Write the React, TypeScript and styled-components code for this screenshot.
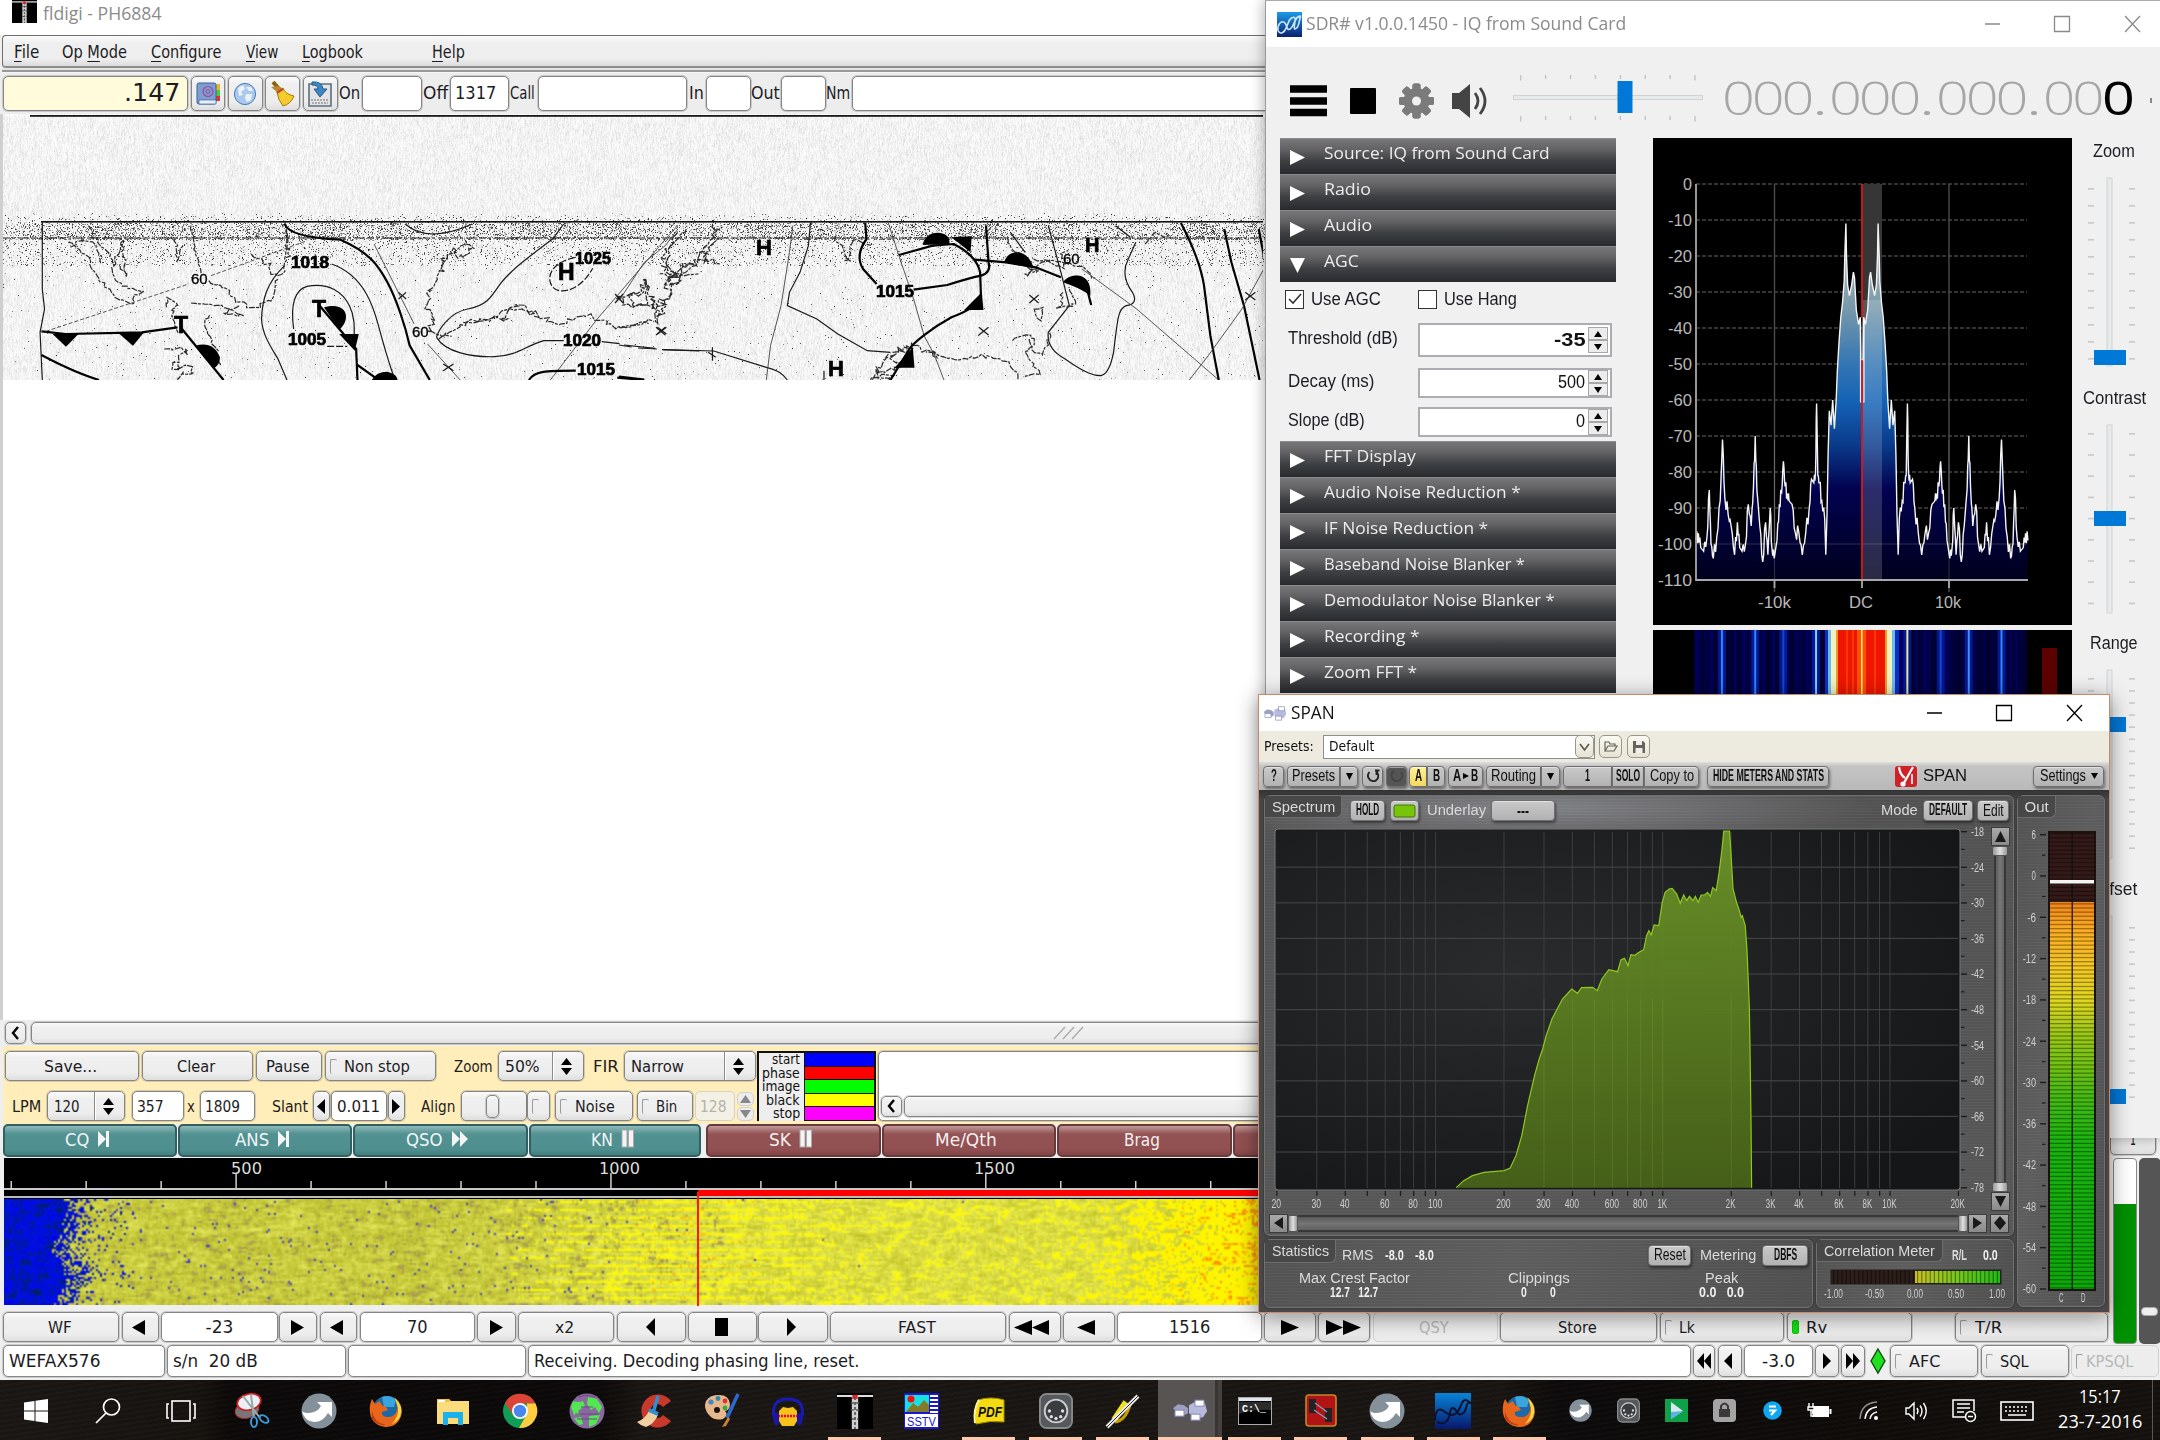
import React, { useLayoutEffect, useRef } from "react";
import styled, { createGlobalStyle, css } from "styled-components";

const TAHOMA = '"DejaVu Sans", Verdana, sans-serif';
const SEGOE = '"Open Sans", "Noto Sans", sans-serif';
const ARIAL = '"Liberation Sans", Arial, sans-serif';
const NARROW = '"Liberation Sans Narrow", "Liberation Sans", sans-serif';

const Global = createGlobalStyle`
  * { box-sizing: border-box; }
  body { margin: 0; background: #fff; }
`;

/* ---------- shared helpers ---------- */

function rng(seed: number) {
  let s = seed >>> 0;
  return () => {
    s = (s + 0x6d2b79f5) >>> 0;
    let t = s;
    t = Math.imul(t ^ (t >>> 15), t | 1);
    t ^= t + Math.imul(t ^ (t >>> 7), t | 61);
    return ((t ^ (t >>> 14)) >>> 0) / 4294967296;
  };
}

const FitBox = styled.span<{ $w: number; $s: number; $c: string; $f: string; $b: number; $ls: number }>`
  display: inline-block;
  flex: none;
  width: ${(p) => p.$w}px;
  margin-top: ${(p) => (p.$s === 16.5 && p.$f === TAHOMA ? 2 : 0)}px;
  font-family: ${(p) => p.$f};
  font-size: ${(p) => p.$s}px;
  font-weight: ${(p) => p.$b};
  letter-spacing: ${(p) => p.$ls}px;
  line-height: 1.2;
  color: ${(p) => p.$c};
  white-space: pre;
`;
const FitInner = styled.span`
  display: inline-block;
  transform-origin: 0 50%;
  u { text-underline-offset: 3px; }
`;

type FitProps = { w: number; s?: number; c?: string; f?: string; b?: number; ls?: number; children: React.ReactNode };

/* Text condensed or widened so that it fills exactly the given width. */
function Fit({ w, s = 17, c = "#1c1c24", f = TAHOMA, b = 400, ls = 0, children }: FitProps) {
  const ref = useRef<HTMLSpanElement>(null);
  useLayoutEffect(() => {
    const el = ref.current;
    if (!el) return;
    el.style.transform = "none";
    const natural = el.offsetWidth;
    if (natural) el.style.transform = `scaleX(${w / natural})`;
  });
  return (
    <FitBox $w={w} $s={s} $c={c} $f={f} $b={b} $ls={ls}>
      <FitInner ref={ref}>{children}</FitInner>
    </FitBox>
  );
}

type Paint = (ctx: CanvasRenderingContext2D, w: number, h: number) => void;
const Surface = styled.canvas`display: block;`;
function Painted({ w, h, cw, ch, paint }: { w: number; h: number; cw?: number; ch?: number; paint: Paint }) {
  const ref = useRef<HTMLCanvasElement>(null);
  const rw = cw ?? w;
  const rh = ch ?? h;
  useLayoutEffect(() => {
    const ctx = ref.current?.getContext("2d");
    if (ctx) paint(ctx, rw, rh);
  }, [paint, rw, rh]);
  return <Surface ref={ref} width={rw} height={rh} style={{ width: w, height: h }} />;
}

const Svg = styled.svg`display: block; flex: none; overflow: visible;`;

const Row = styled.div<{ $h?: number; $pl?: number; $pt?: number }>`
  display: flex;
  flex: none;
  align-items: center;
  ${(p) => p.$h !== undefined && `height: ${p.$h}px;`}
  padding-left: ${(p) => p.$pl ?? 0}px;
  padding-top: ${(p) => p.$pt ?? 0}px;
`;
const Gap = styled.div<{ $w?: number; $h?: number }>`
  flex: none;
  width: ${(p) => p.$w ?? 0}px;
  height: ${(p) => p.$h ?? 0}px;
`;
const Grow = styled.div`flex: 1;`;

const Desktop = styled.div`
  position: relative;
  width: 2160px;
  height: 1440px;
  overflow: hidden;
  background: #fff;
`;

/* ---------- fldigi ---------- */

const FlWindow = styled.section`
  position: absolute;
  left: 0;
  top: 0;
  width: 2160px;
  height: 1380px;
  display: flex;
  flex-direction: column;
  background: #efefef;
  overflow: hidden;
`;
const FlTitle = styled.header`
  display: flex;
  flex: none;
  gap: 6px;
  height: 35px;
  padding: 0 0 0 12px;
  background: #fff;
`;
const FlMenu = styled.nav`
  display: flex;
  flex: none;
  align-items: center;
  height: 33px;
  margin-left: 2px;
  padding: 2px 0 0 11px;
  border: 1px solid #6c6c6c;
  border-bottom: 2px solid #8d8d8d;
  border-radius: 4px;
  background: linear-gradient(#fafafa, #efefef 25%, #eeeeee 75%, #dcdcdc);
`;
const Rule = styled.div`
  flex: none;
  height: 5px;
  margin-left: 2px;
  background: linear-gradient(#e4e4e4 0 2px, #999 2px 4px, #f6f6f6 4px);
`;
const FlToolbar = styled.div`
  display: flex;
  flex: none;
  align-items: center;
  height: 41px;
  padding: 0 0 0 3px;
  background: #ededed;
`;
const bevel = css`
  border: 1px solid #858585;
  border-radius: 5px;
  box-shadow: 0 0 0 1px rgba(120, 120, 120, 0.3);
`;
const FlBtn = styled.div<{ $w: number; $h: number; $off?: boolean }>`
  ${bevel}
  display: flex;
  flex: none;
  align-items: center;
  justify-content: center;
  width: ${(p) => p.$w}px;
  height: ${(p) => p.$h}px;
  padding-right: ${(p) => (p.$w > 60 ? 3 : 1)}px;
  background: linear-gradient(#fbfbfb, #f0f0f0 20%, #ededed 75%, #dedede);
  ${(p) => p.$off && "border-color: #d0d0d0; box-shadow: none; background: #ededed;"}
`;
const FlLeft = styled(FlBtn)`
  justify-content: flex-start;
  padding-left: 4px;
  gap: 3px;
`;
const FlInput = styled.div<{ $w: number; $h: number; $bg?: string; $right?: boolean; $mid?: boolean; $off?: boolean }>`
  ${bevel}
  display: flex;
  flex: none;
  align-items: center;
  justify-content: ${(p) => (p.$right ? "flex-end" : p.$mid ? "center" : "flex-start")};
  width: ${(p) => p.$w}px;
  height: ${(p) => p.$h}px;
  padding: 0 ${(p) => (p.$right ? 7 : 4)}px;
  background: ${(p) => p.$bg ?? "#fff"};
  ${(p) => p.$off && "border-color: #d8d2c0; box-shadow: none; background: #f3f0e6;"}
`;
const Corner = styled.i<{ $on?: boolean }>`
  flex: none;
  width: 7px;
  height: 15px;
  border: 1px solid #9a9a9a;
  border-right: none;
  border-bottom: none;
  border-radius: 2px;
  ${(p) => p.$on && "background: #12dd12; border: 1px solid #12c012; height: 14px;"}
`;
const Divider = styled.i`
  flex: none;
  width: 2px;
  height: 100%;
  border-left: 1px solid #8a8a8a;
  border-right: 1px solid #fff;
`;

const Tri = ({ d, w, h, c = "#000" }: { d: "l" | "r" | "u" | "d"; w: number; h: number; c?: string }) => {
  const pts = { l: "10,0 0,5 10,10", r: "0,0 10,5 0,10", u: "0,10 5,0 10,10", d: "0,0 10,0 5,10" }[d];
  return (
    <Svg width={w} height={h} viewBox="0 0 10 10" preserveAspectRatio="none"><polygon points={pts} fill={c} /></Svg>
  );
};
const UpDown = styled.div`
  display: flex;
  flex: 1;
  flex-direction: column;
  align-items: center;
  gap: 3px;
`;

function Combo({ w, value, tw, div }: { w: number; value: string; tw: number; div: number }) {
  return (
    <FlInput $w={w} $h={30} $bg="linear-gradient(#fbfbfb,#efefef 25%,#ededed 75%,#dedede)">
      <Gap $w={2} />
      <Fit w={tw} s={16.5}>{value}</Fit>
      <Gap $w={div - tw - 9} />
      <Divider />
      <UpDown><Tri d="u" w={11} h={7} /><Tri d="d" w={11} h={7} /></UpDown>
    </FlInput>
  );
}

const FaxView = styled.div`
  position: relative;
  flex: none;
  height: 906px;
  border-left: 3px solid #cfcfcf;
  background: #fff;
`;
const FaxMap = styled.svg`
  position: absolute;
  left: 0;
  top: 0;
`;

const paintFax: Paint = (ctx, w, h) => {
  const r = rng(7);
  const img = ctx.createImageData(w, h);
  const prev = new Float32Array(w);
  for (let y = 0; y < h; y++) {
    for (let x = 0; x < w; x++) {
      const n = r();
      let v = 251 - Math.pow(n, 3) * 28;
      prev[x] = prev[x] * 0.55 + (251 - v) * 0.7;
      v = 253 - prev[x];
      let p = 0;
      if (y > 98 && y < 109) p = (y - 98) * 0.014;
      if (y >= 109 && y < 125) p = 0.3;
      if (y >= 123 && y < 126) p = 0.5;
      if (y >= 126 && y < 152) p = 0.1;
      if (y >= 152) p = 0.006;
      if (y >= 109 && y < 125) p *= 0.7 + 0.7 * Math.abs(Math.sin(x / 70) * Math.sin(x / 23));
      if (r() < p) v -= 40 + r() * 160;
      const i = (y * w + x) * 4;
      img.data[i] = img.data[i + 1] = img.data[i + 2] = Math.max(10, v);
      img.data[i + 3] = 255;
    }
  }
  ctx.putImageData(img, 0, 0);
};

function rough(pts: number[][], amp: number, seed: number) {
  const r = rng(seed);
  let d = `M${pts[0][0]} ${pts[0][1]}`;
  for (let i = 1; i < pts.length; i++) {
    const [ax, ay] = pts[i - 1];
    const [bx, by] = pts[i];
    const n = Math.max(2, Math.round(Math.hypot(bx - ax, by - ay) / 9));
    for (let k = 1; k <= n; k++) {
      const t = k / n;
      d += `L${(ax + (bx - ax) * t + (r() - 0.5) * amp).toFixed(1)} ${(ay + (by - ay) * t + (r() - 0.5) * amp).toFixed(1)}`;
    }
  }
  return d;
}

const Ink = styled.g`
  path, line { fill: none; stroke: #1a1a1a; stroke-width: 1.2; vector-effect: non-scaling-stroke; }
  path.b { stroke-width: 2.2; stroke: #000; }
  path.t { stroke-width: 0.9; stroke: #444; }
  path.f { fill: #000; stroke: none; }
  path.c { stroke: #2a2a2a; stroke-dasharray: 6 1 3 1.5; }
  path.dash { stroke-dasharray: 7 2; }
  path.t.dash { stroke-dasharray: 4 2; }
  text { font-family: ${ARIAL}; font-weight: 700; fill: #000; stroke: #000; stroke-width: 0.7; }
  text.thin { font-weight: 400; stroke-width: 0.3; }
`;

const coastA: [number[][], number][] = [
  [[[155, 730], [200, 775], [215, 830], [245, 870], [262, 895], [300, 915], [300, 885], [330, 880]], 10],
  [[[160, 745], [190, 720], [215, 735], [230, 790]], 10],
  [[[258, 800], [275, 725], [285, 830], [270, 800]], 10],
  [[[200, 680], [215, 720], [250, 770], [260, 840], [290, 870], [325, 880]], 9],
  [[[395, 720], [400, 790], [412, 740]], 8],
  [[[430, 680], [440, 760], [455, 820]], 6],
  [[[470, 845], [510, 865], [530, 905], [575, 930], [615, 895], [620, 840]], 12],
  [[[565, 765], [600, 790], [615, 830], [640, 825], [650, 780], [640, 690]], 14],
  [[[430, 912], [490, 918], [550, 950], [500, 945], [540, 920]], 8],
  [[[375, 925], [380, 900], [405, 915], [385, 930], [400, 1000]], 10],
  [[[470, 950], [465, 1000], [480, 1030], [500, 1100]], 14],
  [[[370, 1050], [420, 1060], [390, 1100], [440, 1110], [395, 1143]], 24],
  [[[1045, 735], [1010, 770], [985, 830], [965, 880], [955, 920], [975, 960], [960, 1000], [1010, 1010]], 14],
  [[[1045, 735], [1060, 750], [1030, 780], [1015, 750], [985, 800]], 14],
  [[[985, 1020], [1050, 970], [1100, 965], [1150, 925], [1200, 945], [1250, 975], [1325, 950], [1380, 985], [1470, 965]], 16],
  [[[1040, 970], [1090, 965], [1130, 960], [1160, 920], [1210, 950]], 24],
  [[[1385, 900], [1420, 880], [1440, 890], [1450, 850], [1470, 920], [1410, 920], [1385, 900]], 16],
  [[[1490, 940], [1470, 965], [1500, 860], [1520, 820], [1560, 790]], 24],
  [[[1520, 700], [1490, 770], [1500, 830], [1560, 820]], 16],
];
const coastB: [number[][], number][] = [
  [[[160, 690], [120, 750], [110, 800], [135, 830], [185, 800], [205, 740], [245, 680]], 10],
  [[[100, 800], [150, 850], [115, 860], [150, 800], [210, 790], [190, 760]], 24],
  [[[220, 680], [230, 720], [200, 780], [240, 790]], 16],
  [[[75, 900], [95, 950], [130, 860], [100, 820]], 14],
  [[[20, 890], [50, 880], [60, 840], [70, 920], [40, 920], [20, 890]], 14],
  [[[0, 985], [70, 970]], 8],
  [[[515, 710], [545, 790], [555, 720], [600, 740]], 14],
  [[[740, 1060], [800, 1085], [860, 1070], [930, 1090], [950, 1143]], 10],
  [[[650, 1060], [700, 1040], [640, 1080], [680, 1100], [610, 1120], [650, 1143], [600, 1140]], 22],
  [[[640, 1065], [620, 1110], [600, 1143]], 18],
  [[[700, 1040], [760, 1070], [730, 1060]], 14],
  [[[935, 1025], [975, 1005], [990, 1030], [965, 1060], [1000, 1125], [960, 1130]], 8],
  [[[975, 1020], [985, 1060], [1010, 1065], [1025, 1000]], 8],
  [[[985, 930], [1010, 925], [1000, 965], [985, 930]], 6],
  [[[925, 720], [950, 780], [990, 820], [960, 830], [1020, 790], [1050, 810], [1060, 760]], 18],
  [[[985, 780], [1040, 790], [1100, 800], [1130, 840]], 10],
  [[[1055, 880], [1045, 930], [1080, 920], [1075, 870]], 14],
  [[[1250, 735], [1275, 700], [1300, 720]], 10],
];

function WeatherMap() {
  return (
    <FaxMap width={1260} height={266} viewBox="4 115 1260 266">
      <rect x={31} y={116} width={1240} height={1.8} fill="#1a1a1a" />
      <rect x={42} y={222} width={1230} height={1.6} fill="#111" />
      <path d="M4 239H1268" stroke="#333" strokeWidth={1.2} strokeDasharray="7 2 3 3 11 2" fill="none" />
      <Ink transform="scale(0.44643 0.33333)">
        {coastA.map(([p, a], i) => <path key={i} className="c" d={rough(p, a, i + 3)} />)}
        <path d="M97 669L97 870L102 930L92 1000L97 1143" />
        <path d="M640 800C600 850 590 900 588 960C590 1010 612 1050 625 1080L645 1143" />
        <path d="M640 669L648 720L640 780" className="c" /><path d="M745 795C820 830 840 930 850 980S870 1080 887 1143" />
        <path d="M640 675Q650 715 765 722C830 760 850 800 870 850S910 980 920 1040L965 1143" className="b" />
        <path d="M660 990C655 940 655 875 690 862C740 850 770 880 785 920S795 1000 795 1040" />
        <path d="M735 1042L780 1042" className="dash" />
        <path d="M715 915L800 1050L803 1143" className="b" />
        <path d="M803 1098L850 1143" className="b" />
        <path d="M728 925C780 905 790 960 762 992Z" className="f" />
        <path d="M762 1005L806 1005L797 1055Z" className="f" />
        <path d="M835 1143Q845 1118 870 1118Q892 1125 893 1143Z" className="f" />
        <path d="M95 997L150 1005L320 1000L400 985" className="b" />
        <path d="M120 1005L178 1005L150 1043Z" className="f" />
        <path d="M268 1003L325 1000L300 1040Z" className="f" />
        <path d="M410 990L503 1143" className="b" />
        <path d="M440 1040Q480 1025 495 1075Q495 1100 480 1108Z" className="f" />
        <path d="M95 1068C140 1100 180 1125 224 1143" className="b" />
        <path d="M105 997L425 855M475 830L690 725" className="t dash" />
        <path d="M840 735L930 975M960 1035L1033 1143" className="t" />
        <path d="M895 880L912 900M912 880L895 900M995 1095L1018 1115M1018 1095L995 1115M1380 885L1398 912M1398 885L1380 912M1475 985L1495 1005M1495 985L1475 1005" />
        <path d="M1290 775C1240 790 1225 830 1238 860S1300 880 1330 808" className="dash" />
        <path d="M1265 675L1240 720C1190 770 1140 820 1120 860S1090 920 1050 930S985 990 980 1015" />
        <path d="M910 675Q960 735 1060 675" />
        <path d="M980 1015C1000 1060 1060 1075 1110 1073S1180 1040 1220 1025L1265 1025M1350 1028L1390 1034M1400 1038L1470 1048M1485 1052L1568 1056" />
        <path d="M1235 1143L1340 960L1385 890L1480 740L1520 680" className="t" />
        <path d="M1187 1143C1200 1115 1225 1115 1292 1115" className="b" />
        <path d="M1385 1136L1445 1143" className="b" />
      </Ink>
      <Ink transform="translate(620 0) scale(0.42088 0.33333)">
        {coastB.map(([p, a], i) => <path key={i} className="c" d={rough(p, a, i + 40)} />)}
        <path d="M0 1038L30 1044M45 1047L90 1050M105 1052L225 1056L350 1105C380 1115 390 1125 400 1143" />
        <path d="M0 1133L60 1142" className="b" />
        <path d="M0 905L60 790L110 740L140 690" className="t" />
        <path d="M413 680L405 760L385 920L360 1040L350 1143" className="t" />
        <path d="M455 670L450 740L430 820L405 880L400 920L470 960L520 1005L590 1055L645 1060" />
        <path d="M585 672L588 720Q560 770 580 810L612 855" className="b" />
        <path d="M640 672L665 770L700 900L725 1010L750 1070L772 1143" className="t" />
        <path d="M665 768L745 740L795 735Q850 770 858 820L860 890Q860 920 790 955C740 990 700 1030 690 1050L645 1143" className="b" />
        <path d="M700 872L780 858Q830 838 860 830Q885 820 878 790L872 680" className="b" />
        <path d="M845 782L920 790L990 805L1050 835" className="b" />
        <path d="M722 738C725 690 790 690 785 735Z" className="f" />
        <path d="M790 715L838 712L835 760Z" className="f" />
        <path d="M915 790C925 745 975 750 985 808Z" className="f" />
        <path d="M1055 850C1070 820 1125 815 1120 890Q1100 870 1055 850Z" className="f" />
        <path d="M1110 860L1122 918" className="b" />
        <path d="M862 880L866 933L820 933Z" className="f" />
        <path d="M698 1045L702 1106L655 1106Z" className="f" />
        <path d="M1020 680L1050 820L1070 920L1020 1000Q1015 1050 1060 1080C1110 1125 1130 1130 1145 1130Q1165 1125 1175 1060C1185 960 1185 930 1205 920Q1235 915 1220 880Q1190 830 1210 780L1228 730" />
        <path d="M1100 810L1230 930L1425 1143" className="t" />
        <path d="M1335 672Q1380 780 1390 860L1405 1010L1425 1143" className="b" />
        <path d="M1438 690L1455 790L1485 920L1522 1143" className="b" />
        <path d="M1355 1143L1400 1070L1480 930L1532 810" className="t" />
        <path d="M1520 690L1532 770" className="b" />
        <path d="M975 888L997 912M997 888L975 912M855 985L878 1008M878 985L855 1008M88 985L110 1008M110 985L88 1008M1488 880L1512 903M1512 880L1488 903M212 1060L230 1075M222 1045L222 1085M487 1115L487 1143" />
        <path d="M930 700L965 760M1180 680L1215 715" />
      </Ink>
      <Ink>
        <g fontSize={16}>
          <text x={292} y={269} textLength={38} lengthAdjust="spacingAndGlyphs">1018</text>
          <text x={289} y={346} textLength={38} lengthAdjust="spacingAndGlyphs">1005</text>
          <text x={576} y={265} textLength={36} lengthAdjust="spacingAndGlyphs">1025</text>
          <text x={564} y={347} textLength={38} lengthAdjust="spacingAndGlyphs">1020</text>
          <text x={578} y={376} textLength={38} lengthAdjust="spacingAndGlyphs">1015</text>
          <text x={877} y={298} textLength={38} lengthAdjust="spacingAndGlyphs">1015</text>
        </g>
        <g fontSize={23}>
          <text x={313} y={318}>T</text>
          <text x={175} y={334}>T</text>
          <text x={559} y={281}>H</text>
          <text x={757} y={256} fontSize={22}>H</text>
          <text x={1086} y={253} fontSize={20}>H</text>
          <text x={829} y={377} fontSize={22}>H</text>
        </g>
        <g fontSize={15}>
          <text x={192} y={285} className="thin">60</text>
          <text x={413} y={338} className="thin">60</text>
          <text x={1064} y={265} className="thin">60</text>
        </g>
      </Ink>
    </FaxMap>
  );
}

const ScrollRow = styled.div`
  display: flex;
  flex: none;
  align-items: center;
  height: 26px;
  padding-left: 5px;
  gap: 5px;
  background: #eee;
`;
const FaxPanel = styled.div`
  display: flex;
  flex: none;
  height: 78px;
  margin-left: 3px;
  padding: 5px 0 3px 2px;
  background: #ffeeb9;
`;
const Col = styled.div<{ $w?: number; $g?: number }>`
  display: flex;
  flex: none;
  flex-direction: column;
  ${(p) => p.$w !== undefined && `width: ${p.$w}px;`}
  gap: ${(p) => p.$g ?? 0}px;
`;
const Legend = styled.div`
  flex: none;
  width: 119px;
  height: 70px;
  border: 2px solid #111;
  border-bottom: none;
  background: #eee;
  overflow: hidden;
`;
const LegendRow = styled.div`
  display: flex;
  justify-content: flex-end;
  height: 13.5px;
  align-items: center;
  gap: 4px;
`;
const Swatch = styled.i<{ $c: string }>`
  width: 70px;
  height: 13.5px;
  border: 1px solid #111;
  border-top: none;
  border-right: none;
  background: ${(p) => p.$c};
`;
const TextBox = styled.div`
  ${bevel}
  display: flex;
  flex: none;
  flex-direction: column;
  justify-content: flex-end;
  width: 420px;
  height: 70px;
  padding: 0 0 3px 2px;
  background: #fff;
`;
const MacroBar = styled.div`
  display: flex;
  flex: none;
  height: 33px;
  padding-left: 3px;
  gap: 1px;
`;
const Macro = styled.div<{ $w: number; $red?: boolean }>`
  display: flex;
  flex: none;
  align-items: center;
  justify-content: center;
  gap: 9px;
  width: ${(p) => p.$w}px;
  padding-right: 6px;
  border: 2px solid ${(p) => (p.$red ? "#693a3b" : "#326060")};
  border-radius: 5px;
  background: ${(p) =>
    p.$red
      ? "linear-gradient(#c09a9a, #935253 28%, #915051 80%, #834546)"
      : "linear-gradient(#8fb9b9, #529191 28%, #508f8f 80%, #437f7f)"};
`;
const WfHead = styled.div`
  flex: none;
  width: 2106px;
  height: 41px;
  background: #000;
`;

const paintFall: Paint = (ctx, w, h) => {
  const r = rng(21);
  const img = ctx.createImageData(w, h);
  const up = new Float32Array(w);
  for (let y = 0; y < h; y++) {
    const edge = 26 + Math.sin(y / 5) * 3 + r() * 3;
    const band = Math.sin(y * 1.57) > 0.3 ? 1 : 0;
    let s = 0;
    for (let x = 0; x < w; x++) {
      s = s * 0.62 + (r() - 0.5) * 0.8;
      up[x] = up[x] * 0.35 + s * 0.85;
      const n = up[x];
      let R: number, G: number, B: number;
      const isBlue = x < edge || (x < edge + 18 && r() < 0.7 * (1 - (x - edge) / 18)) || (x < edge + 34 && r() < 0.06);
      if (isBlue) {
        const v = Math.max(0, n + 0.05);
        R = 0; G = 22 * (0.8 + n); B = 228 - v * 190;
      } else {
        const t = Math.min(1, Math.max(0, (x - 230) / 130));
        R = 200 + t * 22 + n * 40;
        G = 202 + t * 22 + n * 40;
        B = 62 + t * 8 + n * 40;
        if (t < 1 && n < -0.42) { R = 170; G = 160; B = 85; }
        if (x < 400 && r() < 0.014 * (1 - t) + 0.001) { R = 60; G = 60; B = 190; }
        if (x >= 400 && r() < 0.0006) { R = 100; G = 90; B = 130; }
        const wave = x > 250 && x < 460 ? 1 - Math.abs(x - 345) / 105 : 0;
        if (wave > 0 && band && n > -0.5 + (1 - wave) * 0.8) { R = 252; G = 246; B = 10; if (wave > 0.72 && r() < 0.14) G = 195; }
        if (x > 300 && n > 0.34 - Math.min(0.12, (x - 300) / 2500)) { R = 250; G = 246; B = 20; }
        const o = (x - 530) / 90;
        if (o > 0) {
          if (n > 0.45 - o * 0.95) { R = 254; G = 244; B = 0; }
          if (x > 575 && n > 0.62 - (x - 575) / 110) { R = 255; G = 130 + r() * 80; B = 0; }
        }
      }
      const i = (y * w + x) * 4;
      img.data[i] = R; img.data[i + 1] = G; img.data[i + 2] = B; img.data[i + 3] = 255;
    }
  }
  ctx.putImageData(img, 0, 0);
};

const WfBody = styled.div`
  position: relative;
  flex: none;
  height: 108px;
`;
const Marker = styled.i`
  position: absolute;
  left: 693px;
  top: -7px;
  width: 2px;
  height: 114px;
  background: #ff1a00;
`;
const Bottom = styled.div`
  display: flex;
  flex: none;
  height: 187px;
`;
const LevelMeter = styled.div`
  width: 24px;
  height: 186px;
  border-radius: 4px;
  background: linear-gradient(#fff 0 45px, #009000 45px);
  border: 1px solid #888;
`;
const LevelSlide = styled.div`
  display: flex;
  flex-direction: column;
  justify-content: flex-end;
  width: 22px;
  height: 186px;
  padding: 0 0 28px 2px;
  border-radius: 5px;
  background: #555;
`;
const SlideKnob = styled.i`
  width: 17px;
  height: 9px;
  border-radius: 4px;
  background: #eee;
  border: 1px solid #aaa;
`;

function MacroGlyph({ kind }: { kind: "next" | "ff" | "pause" }) {
  return (
    <Svg width={kind === "ff" ? 17 : 12} height={20} viewBox={kind === "ff" ? "0 1 17 20" : "0 1 12 20"} fill="#f4f4f4">
      {kind === "next" && <><polygon points="0,1 8,9 0,17" /><rect x={8} y={1} width={3} height={16} /></>}
      {kind === "ff" && <><polygon points="0,1 8,9 0,17" /><polygon points="8,1 16,9 8,17" /></>}
      {kind === "pause" && <><rect x={0} y={0} width={5} height={17} stroke="#aaa" /><rect x={6.5} y={0} width={5} height={17} stroke="#aaa" /></>}
    </Svg>
  );
}

const legend: [string, number, string][] = [
  ["start", 28, "#0000fe"], ["phase", 38, "#fe0000"], ["image", 38, "#00fe00"], ["black", 34, "#fefe00"], ["stop", 27, "#fe00fe"],
];

const Wave = () => (
  <Svg width={25} height={25} viewBox="0 0 24 24">
    <defs><linearGradient id="wv" x1="0" y1="0" x2="0" y2="1"><stop offset="0" stopColor="#1c9be8" /><stop offset="1" stopColor="#0a2070" /></linearGradient></defs>
    <rect width={24} height={24} fill="url(#wv)" />
    <path d="M1 18C3 22 7 20 9 15S12 5 16 5S14 18 18 16S21 6 23 4M1 18C0 12 4 8 7 10S9 19 13 16S17 3 23 4" fill="none" stroke="#cfe6ff" strokeWidth={1.5} />
  </Svg>
);
const Tower = ({ size, h = size }: { size: number; h?: number }) => (
  <Svg width={size} height={h} viewBox="0 0 34 36" preserveAspectRatio="none">
    <rect width={34} height={36} fill="#000" />
    <path d="M0 3H34" stroke="#ddd" strokeWidth={2} />
    <rect x={14} y={2} width={6} height={34} fill="#cfcfcf" />
    <path d="M17 2V6" stroke="#e22" strokeWidth={5} />
    <path d="M13 10H21M13 17H21M14 26H20M17 4V36" stroke="#555" strokeWidth={1.6} strokeDasharray="3 2" />
  </Svg>
);

function Fldigi() {
  return (
    <FlWindow>
      <FlTitle><Tower size={25} h={23} /><Row $h={26}><Fit w={119} s={17.5} c="#8b8b8b" f={SEGOE}>fldigi - PH6884</Fit></Row></FlTitle>
      <FlMenu>
        <Fit w={25}><u>F</u>ile</Fit><Gap $w={23} />
        <Fit w={65}>Op <u>M</u>ode</Fit><Gap $w={24} />
        <Fit w={70}><u>C</u>onfigure</Fit><Gap $w={25} />
        <Fit w={32}><u>V</u>iew</Fit><Gap $w={24} />
        <Fit w={61}><u>L</u>ogbook</Fit><Gap $w={69} />
        <Fit w={33}><u>H</u>elp</Fit>
      </FlMenu>
      <Rule />
      <FlToolbar>
        <FlInput $w={185} $h={35} $bg="#fffbdb" $right><Fit w={56} s={24}>.147</Fit></FlInput><Gap $w={3} />
        <FlBtn $w={34} $h={35}>
          <Svg width={26} height={26} viewBox="0 0 26 26">
            <rect x={20} y={3} width={5} height={17} fill="#e8b62c" /><rect x={20} y={9} width={5} height={6} fill="#4c4" /><rect x={20} y={15} width={5} height={5} fill="#d33" />
            <rect x={2} y={2} width={19} height={21} rx={2} fill="#7d9fd0" stroke="#3b62a0" /><path d="M4 19H21V23H4Z" fill="#e9eef8" stroke="#3b62a0" strokeWidth={0.7} />
            <circle cx={13} cy={10.5} r={5} fill="none" stroke="#a0489c" strokeWidth={1.2} /><circle cx={13} cy={10.5} r={2} fill="none" stroke="#a0489c" />
          </Svg>
        </FlBtn><Gap $w={3} />
        <FlBtn $w={35} $h={35}>
          <Svg width={24} height={24} viewBox="0 0 24 24">
            <circle cx={12} cy={12} r={10.6} fill="#a9c8ec" stroke="#4a7cbd" />
            <path d="M5 6L10 3L12 7L8 10L10 13L6 14ZM13 5L18 5L20 9L16 9ZM13 12L19 12L18 18L14 20L12 16Z" fill="#eaf3fc" />
          </Svg>
        </FlBtn><Gap $w={2} />
        <FlBtn $w={35} $h={35}>
          <Svg width={26} height={26} viewBox="0 0 26 26">
            <path d="M4 1L11 9" stroke="#8a6016" strokeWidth={4} /><path d="M2 6L9 12L13 7L9 5Z" fill="#b98a2c" />
            <path d="M8 11L14 7Q16 13 25 15Q22 23 14 25Q9 19 8 11Z" fill="#f3cb2c" stroke="#a37a10" /><path d="M8 12L14 8" stroke="#c33" strokeWidth={2} />
          </Svg>
        </FlBtn><Gap $w={3} />
        <FlBtn $w={35} $h={35}>
          <Svg width={26} height={26} viewBox="0 0 26 26">
            <path d="M2 3H24V25H2Z" fill="#e3e3e3" stroke="#5d6f80" strokeWidth={1.6} /><path d="M4 19H22M5 22H21" stroke="#999" strokeWidth={1.5} strokeDasharray="2 1" />
            <path d="M5 1Q15 0 16 8H20L13 16L7 8H11Q11 4 5 4Z" fill="#3f86c0" stroke="#1d5c93" />
          </Svg>
        </FlBtn><Gap $w={1} />
        <Fit w={21}>On</Fit><Gap $w={2} /><FlInput $w={60} $h={35} /><Gap $w={1} />
        <Fit w={25}>Off</Fit><Gap $w={2} /><FlInput $w={59} $h={35}><Fit w={41}>1317</Fit></FlInput><Gap $w={1} />
        <Fit w={25}>Call</Fit><Gap $w={3} /><FlInput $w={149} $h={35} /><Gap $w={2} />
        <Fit w={15}>In</Fit><Gap $w={2} /><FlInput $w={45} $h={35} />
        <Fit w={29}>Out</Fit><Gap $w={1} /><FlInput $w={45} $h={35} />
        <Fit w={24}>Nm</Fit><Gap $w={2} /><FlInput $w={440} $h={35} />
      </FlToolbar>
      <FaxView>
        <Painted w={1262} h={266} paint={paintFax} />
        <WeatherMap />
      </FaxView>
      <ScrollRow>
        <FlBtn $w={21} $h={22}><Svg width={7} height={12} viewBox="0 0 7 12"><path d="M6 0L1 6L6 12" fill="none" stroke="#000" strokeWidth={2.4} /></Svg></FlBtn>
        <FlBtn $w={2078} $h={22}>
          <Svg width={32} height={14} viewBox="0 0 32 14"><path d="M1 13L12 1M10 13L21 1M19 13L30 1" stroke="#aaa" strokeWidth={1.3} fill="none" /></Svg>
        </FlBtn>
      </ScrollRow>
      <FaxPanel>
        <Col $w={752} $g={10}>
          <Row $h={30}>
            <FlBtn $w={134} $h={30}><Fit w={53} s={16.5}>Save...</Fit></FlBtn><Gap $w={3} />
            <FlBtn $w={111} $h={30}><Fit w={38} s={16.5}>Clear</Fit></FlBtn><Gap $w={3} />
            <FlBtn $w={66} $h={30}><Fit w={44} s={16.5}>Pause</Fit></FlBtn><Gap $w={3} />
            <FlLeft $w={111} $h={30}><Corner /><Gap $w={1} /><Fit w={66} s={16.5}>Non stop</Fit></FlLeft><Gap $w={18} />
            <Fit w={39} s={16.5}>Zoom</Fit><Gap $w={5} />
            <Combo w={86} value="50%" tw={35} div={56} /><Gap $w={9} />
            <Fit w={26} s={16.5}>FIR</Fit><Gap $w={5} />
            <Combo w={132} value="Narrow" tw={53} div={102} />
          </Row>
          <Row $h={30}>
            <Gap $w={7} /><Fit w={29} s={16.5}>LPM</Fit><Gap $w={6} />
            <Combo w={78} value="120" tw={26} div={49} /><Gap $w={7} />
            <FlInput $w={52} $h={30}><Fit w={27} s={16.5}>357</Fit></FlInput><Gap $w={3} />
            <Fit w={8} s={16.5}>x</Fit><Gap $w={5} />
            <FlInput $w={55} $h={30}><Fit w={35} s={16.5}>1809</Fit></FlInput><Gap $w={17} />
            <Fit w={36} s={16.5}>Slant</Fit><Gap $w={5} />
            <FlBtn $w={17} $h={30}><Tri d="l" w={8} h={15} /></FlBtn><Gap $w={1} />
            <FlInput $w={56} $h={30}><Gap $w={1} /><Fit w={43} s={16.5}>0.011</Fit></FlInput><Gap $w={1} />
            <FlBtn $w={17} $h={30}><Tri d="r" w={8} h={15} /></FlBtn><Gap $w={16} />
            <Fit w={34} s={16.5}>Align</Fit><Gap $w={6} />
            <FlBtn $w={66} $h={30}><FlBtn $w={13} $h={23} /></FlBtn>
            <FlLeft $w={23} $h={30}><Corner /></FlLeft><Gap $w={5} />
            <FlLeft $w={78} $h={30}><Corner /><Gap $w={2} /><Fit w={40} s={16.5}>Noise</Fit></FlLeft><Gap $w={4} />
            <FlLeft $w={56} $h={30}><Corner /><Gap $w={1} /><Fit w={21} s={16.5}>Bin</Fit></FlLeft><Gap $w={2} />
            <FlInput $w={40} $h={30} $off><Fit w={27} s={16.5} c="#b5b2a8">128</Fit></FlInput><Gap $w={2} />
            <Col $g={1}>
              <FlBtn $w={17} $h={14} $off><Tri d="u" w={11} h={8} c="#888" /></FlBtn>
              <FlBtn $w={17} $h={14} $off><Tri d="d" w={11} h={8} c="#888" /></FlBtn>
            </Col>
          </Row>
        </Col>
        <Legend>
          {legend.map(([t, w, c]) => (
            <LegendRow key={t}><Fit w={w} s={14.5} c="#111">{t}</Fit><Swatch $c={c} /></LegendRow>
          ))}
        </Legend>
        <Gap $w={2} />
        <TextBox>
          <Row $h={22}>
            <FlBtn $w={21} $h={21}><Svg width={7} height={12} viewBox="0 0 7 12"><path d="M6 0L1 6L6 12" fill="none" stroke="#000" strokeWidth={2.4} /></Svg></FlBtn>
            <Gap $w={2} /><FlBtn $w={390} $h={21} />
          </Row>
        </TextBox>
      </FaxPanel>
      <MacroBar>
        <Macro $w={174}><Fit w={24} c="#f1f6f6">CQ</Fit><MacroGlyph kind="next" /></Macro>
        <Macro $w={174}><Fit w={34} c="#f1f6f6">ANS</Fit><MacroGlyph kind="next" /></Macro>
        <Macro $w={175}><Fit w={37} c="#f1f6f6">QSO</Fit><MacroGlyph kind="ff" /></Macro>
        <Macro $w={172}><Fit w={22} c="#f1f6f6">KN</Fit><MacroGlyph kind="pause" /></Macro>
        <Gap $w={3} />
        <Macro $red $w={175}><Fit w={22} c="#f6f0f0">SK</Fit><MacroGlyph kind="pause" /></Macro>
        <Macro $red $w={174}><Fit w={62} c="#f6f0f0">Me/Qth</Fit></Macro>
        <Macro $red $w={175}><Fit w={36} c="#f6f0f0">Brag</Fit></Macro>
        <Macro $red $w={174} />
        <Macro $red $w={701} />
        <FlBtn $w={46} $h={31}><Fit w={6}>1</Fit></FlBtn>
      </MacroBar>
      <Bottom>
        <Col $w={2111}>
          <Row $pl={4} $pt={1}>
            <WfHead>
              <Svg width={2104} height={41} viewBox="4 1160 2104 41">
                <rect x={4} y={1190} width={2104} height={2} fill="#c8c8c8" />
                <rect x={698} y={1192} width={1400} height={6} fill="#f00" />
                <rect x={4} y={1198} width={2104} height={2} fill="#bbb" />
                {Array.from({ length: 18 }, (_, i) => (
                  <rect key={i} x={10.5 + i * 74.97} y={i % 5 === 3 ? 1175 : 1183} width={1.4} height={i % 5 === 3 ? 15 : 8} fill="#ddd" />
                ))}
                <g fill="#dcdcdc" fontFamily={TAHOMA} fontSize={16.5}>
                  <text x={231} y={1175.500} textLength={31} lengthAdjust="spacingAndGlyphs">500</text>
                  <text x={599} y={1175.500} textLength={41} lengthAdjust="spacingAndGlyphs">1000</text>
                  <text x={974} y={1175.500} textLength={41} lengthAdjust="spacingAndGlyphs">1500</text>
                </g>
              </Svg>
            </WfHead>
          </Row>
          <Row $pl={4}><WfBody><Painted w={1256} h={106} cw={628} ch={53} paint={paintFall} /><Marker /></WfBody></Row>
          <Gap $h={5} />
          <Row $h={30} $pl={3}>
            <FlBtn $w={116} $h={30}><Fit w={24} s={16.5}>WF</Fit></FlBtn><Gap $w={3} />
            <FlBtn $w={37} $h={30}><Tri d="l" w={13} h={15} /><Gap $w={3} /></FlBtn><Gap $w={2} />
            <FlInput $w={117} $h={30} $mid><Fit w={28}>-23</Fit></FlInput><Gap $w={1} />
            <FlBtn $w={38} $h={30}><Tri d="r" w={13} h={15} /></FlBtn><Gap $w={3} />
            <FlBtn $w={37} $h={30}><Tri d="l" w={13} h={15} /><Gap $w={3} /></FlBtn><Gap $w={3} />
            <FlInput $w={115} $h={30} $mid><Fit w={21}>70</Fit></FlInput><Gap $w={2} />
            <FlBtn $w={39} $h={30}><Tri d="r" w={13} h={15} /></FlBtn><Gap $w={2} />
            <FlBtn $w={96} $h={30}><Fit w={19} s={16.5}>x2</Fit></FlBtn><Gap $w={3} />
            <FlBtn $w={69} $h={30}><Tri d="l" w={9} h={18} /></FlBtn><Gap $w={2} />
            <FlBtn $w={69} $h={30}><Svg width={13} height={18}><rect width={13} height={18} /></Svg></FlBtn><Gap $w={1} />
            <FlBtn $w={70} $h={30}><Tri d="r" w={9} h={18} /></FlBtn><Gap $w={2} />
            <FlBtn $w={176} $h={30}><Fit w={38} s={16.5}>FAST</Fit></FlBtn><Gap $w={3} />
            <FlBtn $w={52} $h={30}><Tri d="l" w={18} h={15} /><Tri d="l" w={17} h={15} /><Gap $w={6} /></FlBtn><Gap $w={2} />
            <FlBtn $w={52} $h={30}><Tri d="l" w={18} h={15} /><Gap $w={5} /></FlBtn><Gap $w={2} />
            <FlInput $w={145} $h={30} $mid><Fit w={41}>1516</Fit></FlInput><Gap $w={2} />
            <FlBtn $w={52} $h={30}><Tri d="r" w={18} h={15} /></FlBtn><Gap $w={2} />
            <FlBtn $w={52} $h={30}><Tri d="r" w={17} h={15} /><Tri d="r" w={18} h={15} /></FlBtn><Gap $w={3} />
            <FlBtn $w={125} $h={30} $off><Fit w={30} s={16.5} c="#b8b8b8">QSY</Fit></FlBtn><Gap $w={2} />
            <FlBtn $w={157} $h={30}><Fit w={39} s={16.5}>Store</Fit></FlBtn><Gap $w={3} />
            <FlLeft $w={124} $h={30}><Corner /><Gap $w={1} /><Fit w={16} s={16.5}>Lk</Fit></FlLeft><Gap $w={3} />
            <FlLeft $w={125} $h={30}><Corner $on /><Gap $w={1} /><Fit w={21} s={16.5}>Rv</Fit></FlLeft><Gap $w={43} />
            <FlLeft $w={153} $h={30}><Corner /><Gap $w={2} /><Fit w={27} s={16.5}>T/R</Fit></FlLeft>
          </Row>
        </Col>
        <Row $h={187} $pl={2}><LevelMeter /><Gap $w={2} /><LevelSlide><SlideKnob /></LevelSlide></Row>
      </Bottom>
      <Row $h={34} $pl={3}>
        <FlInput $w={162} $h={32}><Gap $w={1} /><Fit w={92}>WEFAX576</Fit></FlInput><Gap $w={2} />
        <FlInput $w={179} $h={32}><Gap $w={1} /><Fit w={85}>s/n  20 dB</Fit></FlInput><Gap $w={2} />
        <FlInput $w={178} $h={32} /><Gap $w={2} />
        <FlInput $w={1163} $h={32}><Gap $w={1} /><Fit w={325}>Receiving. Decoding phasing line, reset.</Fit></FlInput><Gap $w={2} />
        <FlBtn $w={22} $h={32}><Tri d="l" w={7} h={16} /><Tri d="l" w={7} h={16} /></FlBtn><Gap $w={3} />
        <FlBtn $w={24} $h={32}><Tri d="l" w={8} h={16} /><Gap $w={3} /></FlBtn><Gap $w={2} />
        <FlInput $w={69} $h={32} $mid><Fit w={33}>-3.0</Fit></FlInput><Gap $w={2} />
        <FlBtn $w={24} $h={32}><Tri d="r" w={8} h={16} /></FlBtn><Gap $w={2} />
        <FlBtn $w={24} $h={32}><Tri d="r" w={7} h={16} /><Tri d="r" w={7} h={16} /></FlBtn><Gap $w={5} />
        <Svg width={16} height={26} viewBox="0 0 16 26"><polygon points="8,1 15,13 8,25 1,13" fill="#1fe01f" stroke="#124d12" strokeWidth={1.4} /></Svg><Gap $w={4} />
        <FlLeft $w={88} $h={32}><Corner /><Gap $w={1} /><Fit w={31} s={16.5}>AFC</Fit></FlLeft><Gap $w={3} />
        <FlLeft $w={88} $h={32}><Corner /><Gap $w={1} /><Fit w={29} s={16.5}>SQL</Fit></FlLeft><Gap $w={2} />
        <FlLeft $w={88} $h={32} $off><Corner /><Fit w={47} s={16.5} c="#b8b8b8">KPSQL</Fit></FlLeft>
      </Row>
    </FlWindow>
  );
}

/* ---------- SDR# ---------- */

const SdrWindow = styled.section`
  position: absolute;
  left: 1265px;
  top: 0;
  width: 895px;
  height: 1138px;
  display: flex;
  flex-direction: column;
  border-left: 1px solid #9a9a9a;
  border-top: 1px solid #aaa;
  background: #f0f0f0;
  box-shadow: 0 0 14px rgba(0, 0, 0, 0.35);
`;
const SdrTitle = styled.header`
  display: flex;
  flex: none;
  align-items: center;
  height: 46px;
  padding-left: 11px;
  background: #fff;
`;
const SdrTools = styled.div`
  display: flex;
  flex: none;
  height: 91px;
  padding-left: 23px;
`;
const SdrBody = styled.div`
  display: flex;
  flex: 1;
  padding-left: 14px;
`;
const Accordion = styled.div`
  width: 336px;
  flex: none;
`;
const AccHead = styled.div`
  display: flex;
  align-items: center;
  height: 36px;
  padding: 0 0 6px 10px;
  gap: 19px;
  border-top: 1px solid #8b8b8c;
  background: linear-gradient(#77777a, #626264 30%, #3f4043 62%, #292a2e);
`;
const AccMark = styled.div<{ $open?: boolean }>`
  width: 15px;
  padding-top: ${(p) => (p.$open ? 8 : 7)}px;
`;
const AgcBody = styled.div`
  height: 159px;
  padding: 6px 0 0 5px;
`;
const Check = styled.div`
  flex: none;
  display: flex;
  align-items: center;
  justify-content: center;
  width: 19px;
  height: 19px;
  border: 1.5px solid #333;
  background: #fff;
`;
const NumBox = styled.div<{ $h: number }>`
  display: flex;
  flex: none;
  align-items: center;
  justify-content: flex-end;
  width: 194px;
  height: ${(p) => p.$h}px;
  padding-right: 2px;
  gap: 3px;
  border: 2px solid #abadb3;
  background: #fff;
`;
const NumLabel = styled.div`
  padding-bottom: 4px;
`;
const Spin = styled.div`
  display: flex;
  flex-direction: column;
  gap: 0;
`;
const SpinBtn = styled.div`
  display: flex;
  align-items: center;
  justify-content: center;
  width: 20px;
  height: 13px;
  border: 1px solid #a8a8a8;
  background: #ececec;
`;

const heads2 = [
  ["FFT Display", 92], ["Audio Noise Reduction *", 197], ["IF Noise Reduction *", 164], ["Baseband Noise Blanker *", 201],
  ["Demodulator Noise Blanker *", 231], ["Recording *", 95], ["Zoom FFT *", 93],
] as const;

function Head({ t, w, open }: { t: string; w: number; open?: boolean }) {
  return (
    <AccHead>
      <AccMark $open={open}><Tri d={open ? "d" : "r"} w={15} h={15} c="#fff" /></AccMark>
      <Fit w={w} s={17} c="#ececec" f={SEGOE} b={500}>{t}</Fit>
    </AccHead>
  );
}
function NumRow({ label, lw, v, vw, h, mt, bold }: { label: string; lw: number; v: string; vw: number; h: number; mt: number; bold?: boolean }) {
  return (
    <Row $h={h + mt} $pt={mt} $pl={3}>
      <NumLabel><Fit w={lw} s={17.5} f={ARIAL}>{label}</Fit></NumLabel><Gap $w={130 - lw} />
      <NumBox $h={h}>
        <Fit w={vw} s={bold ? 19 : 18} f={ARIAL} b={bold ? 700 : 400} c="#111">{v}</Fit>
        <Spin><SpinBtn><Tri d="u" w={8} h={6} /></SpinBtn><SpinBtn><Tri d="d" w={8} h={6} /></SpinBtn></Spin>
      </NumBox>
    </Row>
  );
}

const half: number[][] = [
  [0, -49], [2, -49], [3, -37], [6, -39], [10, -35], [13, -26], [15, -24.5], [18, -28], [22, -31], [25, -28], [27, -20], [28, -11], [30, -20], [31, -27], [34, -33], [37, -37], [40, -44],
  [43, -52], [45, -60], [48, -68], [51, -60], [54, -67], [57, -63], [59, -75], [61, -92], [63, -103], [65, -93], [70, -88], [74, -83], [77, -81], [79, -61], [81, -80], [84, -83], [88, -82],
  [92, -90], [98, -97], [104, -103], [110, -97], [116, -97], [122, -89], [127, -88], [130, -86], [134, -84], [137, -77], [140, -86], [144, -89], [148, -99], [153, -104], [157, -101], [160, -90],
  [164, -103], [168, -94], [173, -105], [178, -95], [183, -85], [186, -70], [189, -84], [193, -95], [198, -89], [203, -100], [209, -102], [213, -101], [217, -94], [222, -103], [228, -95], [233, -92],
  [239, -87], [243, -71], [247, -88], [253, -98], [259, -104], [263, -100], [266, -85], [270, -98], [276, -102], [281, -101], [285, -97], [289, -99],
];
const dy = (db: number) => 184 - db * 3.6;
/* The skirts of the spectrum carry a fine ripple between the main points. */
const dense = half.flatMap(([x, d], i) => {
  if (i === 0 || x < 66) return [[x, d]];
  const [px, pd] = half[i - 1];
  const k = ((i * 37) % 7) - 3;
  return [[px + (x - px) * 0.35, pd + (d - pd) * 0.35 + k * 0.7], [px + (x - px) * 0.65, pd + (d - pd) * 0.65 - k * 0.6], [x, d]];
});
const specPts = [...dense.slice().reverse().map(([x, d]) => [-x, d]), ...dense].map(
  ([x, d]) => `${(1862 + x / 1.742).toFixed(1)},${dy(d).toFixed(1)}`,
);

function Spectrum() {
  return (
    <Svg width={419} height={487} viewBox="1653 138 419 487">
      <defs>
        <linearGradient id="sp" gradientUnits="userSpaceOnUse" x1="0" y1="184" x2="0" y2="580">
          <stop offset="0.2" stopColor="#9eb4b8" /><stop offset="0.32" stopColor="#7497aa" /><stop offset="0.45" stopColor="#3677b4" />
          <stop offset="0.55" stopColor="#1462b6" /><stop offset="0.66" stopColor="#0a3a8a" /><stop offset="0.77" stopColor="#020250" />
          <stop offset="1" stopColor="#00001e" />
        </linearGradient>
      </defs>
      <rect x={1653} y={138} width={419} height={487} />
      {Array.from({ length: 11 }, (_, i) => <path key={i} d={`M1696 ${184 + i * 36}H2027`} stroke="#666" strokeWidth={1.2} strokeDasharray="4 2" />)}
      <path d="M1774.5 184V592M1949 184V592" stroke="#4a4a4a" strokeWidth={1.4} />
      <rect x={1862} y={184} width={20} height={396} fill="#363636" />
      <polygon points={`1696,580 ${specPts.join(" ")} 2027,580`} fill="url(#sp)" />
      <rect x={1862} y={300} width={20} height={280} fill="#fff" opacity={0.17} />
      <path d="M1774.5 440V580M1949 440V580M1696 544H2027" stroke="#bbb" strokeOpacity={0.25} strokeWidth={1} />
      <polyline points={specPts.join(" ")} fill="none" stroke="#f4f4f4" strokeWidth={1.4} />
      <path d="M1860.500 322V402H1864V322" fill="none" stroke="#f4f4f4" strokeWidth={1.2} />
      <path d="M1862 184V318M1862 360V580" stroke="#e01414" strokeWidth={1.8} />
      <path d="M1696 184V580H2028M1774.5 580V588M1862 580V588M1949 580V588" stroke="#a8a8a8" strokeWidth={1.8} fill="none" />
      <g fill="#b8b8b8" fontFamily={ARIAL} fontSize={17}>
        {Array.from({ length: 12 }, (_, i) => {
          const t = i ? `-${i * 10}` : "0";
          const w = [0, 9, 0, 24, 34][t.length];
          return <text key={i} x={1692 - w} y={190 + i * 36} textLength={w} lengthAdjust="spacingAndGlyphs">{t}</text>;
        })}
        <text x={1758} y={608} textLength={33} lengthAdjust="spacingAndGlyphs">-10k</text>
        <text x={1849} y={608} textLength={24} lengthAdjust="spacingAndGlyphs">DC</text>
        <text x={1935} y={608} textLength={26} lengthAdjust="spacingAndGlyphs">10k</text>
      </g>
    </Svg>
  );
}
function SdrFall() {
  const r = rng(5);
  return (
    <Svg width={419} height={80} viewBox="1653 631 419 80">
      <rect x={1653} y={630} width={419} height={90} fill="#000" />
      <rect x={1694} y={630} width={333} height={90} fill="#00002c" />
      {Array.from({ length: 110 }, (_, i) => <rect key={i} x={1695 + i * 3} y={630} width={1 + r() * 3} height={90} fill="#0000a0" opacity={r() * 0.55} />)}
      {[[-244, "#2f86ff"], [-186, "#2f86ff"], [-137, "#1545d8"], [-80, "#7fd0ff"], [79, "#e8e6a0"], [137, "#1545d8"], [186, "#3f90ff"], [243, "#2f86ff"]].map(([x, c]) => (
        <g key={x as number}><rect x={1862 + (x as number) / 1.742 - 4} y={630} width={8} height={90} fill="#0a2cc8" opacity={0.55} /><rect x={1862 + (x as number) / 1.742 - 1} y={630} width={2} height={90} fill={c as string} /></g>
      ))}
      <rect x={1825} y={630} width={74} height={90} fill="#0a30c0" />
      <rect x={1828} y={630} width={67} height={90} fill="#6fb8ea" />
      <rect x={1831} y={630} width={61} height={90} fill="#f2f2c0" />
      <rect x={1836} y={630} width={51} height={90} fill="#f39a1c" />
      <rect x={1838} y={630} width={47} height={90} fill="#ee1600" />
      <path d="M1847 630V710M1875 630V710M1853 630V710" stroke="#ff5a00" strokeWidth={1} />
      <rect x={1857} y={630} width={9} height={90} fill="#ff5200" />
      <rect x={1861} y={630} width={1.6} height={90} fill="#ffe27a" />
      <rect x={2042} y={648} width={15} height={70} fill="#5c0000" />
    </Svg>
  );
}

const SideCol = styled.div`
  display: flex;
  flex-direction: column;
  width: 84px;
`;
const SideBlock = styled.div<{ $h: number }>`
  display: flex;
  flex: none;
  flex-direction: column;
  align-items: center;
  height: ${(p) => p.$h}px;
`;
function VSlider({ label, lw, h, start, pitch, n, thumb }: { label: string; lw: number; h: number; start: number; pitch: number; n: number; thumb: number }) {
  return (
    <SideBlock $h={h}>
      <Row $h={26}><Fit w={lw} s={17.5} f={ARIAL}>{label}</Fit></Row>
      <Svg width={54} height={210} viewBox="1 26 54 210">
        {Array.from({ length: n }, (_, i) => (
          <g key={i} fill="#c9c9c9"><rect x={2} y={start + i * pitch} width={6} height={1.6} /><rect x={43} y={start + i * pitch} width={6} height={1.6} /></g>
        ))}
        <rect x={21} y={40} width={5} height={188} fill="#e7eaea" stroke="#d2d2d2" />
        <rect x={8} y={thumb} width={32} height={15} fill="#0078d7" />
      </Svg>
    </SideBlock>
  );
}

const Digits = styled.div`
  display: flex;
  flex: none;
  align-items: center;
  height: 96px;
  padding-top: 5px;
`;
const WinGlyph = ({ c }: { c: string }) => (
  <Svg width={175} height={18} viewBox="0 0 175 18" fill="none" stroke={c} strokeWidth={1.3}>
    <path d="M0 9H15M69.500 1.500H84.500V16.500H69.500ZM140 1L155 17M155 1L140 17" />
  </Svg>
);
const Dim = ({ w, t }: { w: number; t: string }) => <Fit w={w} s={46} c="#a6a6a6" f={SEGOE} b={300} ls={t === "." ? 0 : -2.5}>{t}</Fit>;

function Sdr() {
  return (
    <SdrWindow>
      <SdrTitle>
        <Wave /><Gap $w={4} /><Fit w={320} s={18} c="#8b8b8b" f={SEGOE}>SDR# v1.0.0.1450 - IQ from Sound Card</Fit>
        <Grow /><WinGlyph c="#8a8a8a" />
      </SdrTitle>
      <SdrTools>
        <Svg width={200} height={91} viewBox="1289 47 200 91">
          <path d="M1290 89H1327M1290 101H1327M1290 112.5H1327" stroke="#000" strokeWidth={7.5} />
          <rect x={1350} y={88} width={26} height={26} rx={1} fill="#000" />
          <g transform="translate(1416.5 101)" fill="#7b7b7b">
            {Array.from({ length: 8 }, (_, i) => <rect key={i} x={-4} y={-17.5} width={8} height={35} rx={2} transform={`rotate(${i * 45})`} />)}
            <circle r={13} /><circle r={4.5} fill="#f0f0f0" />
          </g>
          <path d="M1452 93H1459L1470 84V118L1459 109H1452Z" fill="#444" />
          <path d="M1475 93Q1481 101 1475 109M1480 88Q1490 101 1480 114" fill="none" stroke="#444" strokeWidth={2.8} />
        </Svg>
        <Gap $w={24} />
        <Svg width={192} height={91} viewBox="1513 47 192 91">
          {Array.from({ length: 8 }, (_, i) => (
            <g key={i} fill="#c4c4c4"><rect x={1520 + i * 24.9} y={75} width={1.4} height={i % 7 ? 4 : 5.5} /><rect x={1520 + i * 24.9} y={116} width={1.4} height={i % 7 ? 4 : 5.5} /></g>
          ))}
          <rect x={1513.5} y={95.5} width={189} height={4} fill="#e7eaea" stroke="#d2d2d2" />
          <rect x={1617.500} y={81} width={15} height={32} fill="#0078d7" />
        </Svg>
        <Gap $w={17} />
        <Digits>
          <Dim w={89} t="000" /><Dim w={18} t="." />
          <Dim w={89} t="000" /><Dim w={18} t="." />
          <Dim w={89} t="000" /><Dim w={18} t="." />
          <Dim w={59} t="00" /><Fit w={30} s={46} c="#000" f={SEGOE} ls={-2.5}>0</Fit>
          <Gap $w={18} /><Svg width={2} height={8}><rect width={2} height={5} y={4} fill="#888" /></Svg>
        </Digits>
      </SdrTools>
      <SdrBody>
        <Accordion>
          <Head t="Source: IQ from Sound Card" w={226} /><Head t="Radio" w={47} /><Head t="Audio" w={48} /><Head t="AGC" w={35} open />
          <AgcBody>
            <Row $h={22}>
              <Check><Svg width={14} height={14} viewBox="0 0 14 14"><path d="M1 7L5 11L13 2" fill="none" stroke="#333" strokeWidth={1.6} /></Svg></Check><Gap $w={7} />
              <Fit w={70} s={17.5} f={ARIAL}>Use AGC</Fit><Gap $w={37} /><Check /><Gap $w={7} /><Fit w={73} s={17.5} f={ARIAL}>Use Hang</Fit>
            </Row>
            <NumRow label="Threshold (dB)" lw={110} v="-35" vw={31} h={34} mt={13} bold />
            <NumRow label="Decay (ms)" lw={86} v="500" vw={27} h={30} mt={11} />
            <NumRow label="Slope (dB)" lw={77} v="0" vw={9} h={30} mt={9} />
          </AgcBody>
          {heads2.map(([t, w]) => <Head key={t} t={t} w={w} />)}
        </Accordion>
        <Gap $w={37} />
        <Col $g={6}><Spectrum /><SdrFall /></Col>
        <SideCol>
          <VSlider label="Zoom" lw={42} h={247} start={50} pitch={17} n={11} thumb={212} />
          <VSlider label="Contrast" lw={63} h={245} start={48} pitch={21.2} n={9} thumb={126} />
          <VSlider label="Range" lw={48} h={246} start={48} pitch={12.1} n={15} thumb={87} />
          <VSlider label="Offset" lw={46} h={246} start={51} pitch={12.1} n={15} thumb={213} />
        </SideCol>
      </SdrBody>
    </SdrWindow>
  );
}

/* ---------- SPAN ---------- */

const SpanWindow = styled.section`
  position: absolute;
  left: 1258px;
  top: 694px;
  width: 852px;
  height: 619px;
  display: flex;
  flex-direction: column;
  border: 1px solid #c88a6c;
  background: #484848;
  box-shadow: 0 4px 20px rgba(0, 0, 0, 0.45);
`;
const SpanTitle = styled.header`
  display: flex;
  flex: none;
  align-items: center;
  height: 36px;
  padding-left: 4px;
  background: #fff;
`;
const PresetBar = styled.div`
  display: flex;
  flex: none;
  align-items: center;
  height: 31px;
  padding-left: 5px;
  background: #edebdf;
`;
const ComboBox = styled.div`
  display: flex;
  align-items: center;
  justify-content: space-between;
  width: 272px;
  height: 24px;
  padding-left: 5px;
  border: 1px solid #8e8e8e;
  background: #fff;
`;
const SmallBtn = styled.div<{ $w: number }>`
  display: flex;
  align-items: center;
  justify-content: center;
  width: ${(p) => p.$w}px;
  height: 23px;
  border: 1px solid #9a978a;
  border-radius: 5px;
  background: linear-gradient(#fbfaf3, #e6e3d4);
`;
const SpanTools = styled.div`
  display: flex;
  flex: none;
  align-items: center;
  height: 28px;
  padding-left: 4px;
  background: linear-gradient(#dedede, #c4c4c4 15%, #b9b9b9);
`;
const SBtn = styled.div<{ $w: number; $h?: number; $bg?: string; $j?: "l" | "r" | "m" }>`
  display: flex;
  flex: none;
  align-items: center;
  justify-content: center;
  width: ${(p) => p.$w}px;
  height: ${(p) => p.$h ?? 21}px;
  border: 1px solid #6f6f6f;
  border-radius: ${(p) => ({ l: "4px 0 0 4px", r: "0 4px 4px 0", m: "0", d: "4px" })[p.$j ?? "d"]};
  background: ${(p) => p.$bg ?? "linear-gradient(#c9c9c9, #b2b2b2)"};
  box-shadow: 1px 2px 3px rgba(0, 0, 0, 0.45), inset 0 1px 0 rgba(255, 255, 255, 0.45);
`;
const SpanBody = styled.div`
  display: flex;
  flex: 1;
  padding: 5px 4px 4px 5px;
  gap: 3px;
  background: linear-gradient(#333, #484848 10px);
`;
const metal = css`
  border: 1px solid #707070;
  border-radius: 6px;
  background:
    repeating-linear-gradient(0deg, rgba(255, 255, 255, 0.02) 0 1px, rgba(0, 0, 0, 0.03) 1px 3px),
    linear-gradient(100deg, #565656, #606060 45%, #525252);
  box-shadow: 0 0 2px #222;
`;
const SpecPanel = styled.div`
  ${metal}
  display: flex;
  flex-direction: column;
  width: 750px;
  height: 441px;
  background:
    repeating-linear-gradient(0deg, rgba(255, 255, 255, 0.02) 0 1px, rgba(0, 0, 0, 0.03) 1px 3px),
    radial-gradient(ellipse 340px 40px at 270px 12px, #85868a, rgba(110, 110, 110, 0) 100%),
    linear-gradient(#555, #5a5a5a);
`;
const Tab = styled.div<{ $w: number; $h: number }>`
  flex: none;
  align-self: flex-start;
  display: flex;
  align-items: center;
  justify-content: center;
  width: ${(p) => p.$w}px;
  height: ${(p) => p.$h}px;
  border: solid #6e6e6e;
  border-width: 0 1px 1px 0;
  border-radius: 0 0 6px 0;
  background: #484848;
`;
const StatPanel = styled.div<{ $w: number }>`
  ${metal}
  width: ${(p) => p.$w}px;
  height: 69px;
`;
const OutPanel = styled.div`
  ${metal}
  flex: none;
  width: 88px;
  height: 512px;
`;
const SquareBtn = styled.div`
  display: flex;
  flex: none;
  align-items: center;
  justify-content: center;
  width: 19px;
  height: 19px;
  border: 1px solid #3c3c3c;
  background: linear-gradient(#aaa, #8a8a8a);
`;
const Thumb = styled.i<{ $w: number; $h: number }>`
  flex: none;
  width: ${(p) => p.$w}px;
  height: ${(p) => p.$h}px;
  border: 1px solid #555;
  border-radius: 2px;
  background: linear-gradient(90deg, #999, #e0e0e0, #999);
`;
const HTrack = styled.div`
  flex: 1;
  height: 17px;
  border: solid #383838;
  border-width: 2px 0;
  background: linear-gradient(#5a5a5a, #747474, #626262);
`;
const VTrack = styled.div`
  flex: 1;
  width: 12px;
  border: solid #383838;
  border-width: 0 2px;
  background: linear-gradient(90deg, #5c5c5c, #787878, #626262);
`;
const VScroll = styled.div`
  display: flex;
  flex-direction: column;
  align-items: center;
  width: 20px;
  height: 386px;
  margin-left: 7px;
`;

const dspan = `M357 1496L370 1475L385 1460L405 1450L440 1445L450 1437L460 1400L470 1340L480 1250L492 1160L500 1110L506 1080L512 1040L522 990L540 930L556 900L566 913L573 896L592 895L600 905L608 870L620 842L635 848L641 812L647 808L653 830L658 797L665 799L672 790L680 782L685 740L689 725L693 738L698 708L706 710L712 640L717 610L724 600L729 598L737 615L743 643L749 618L754 635L759 622L765 635L769 622L774 640L779 618L785 618L790 610L795 622L799 596L805 605L810 550L815 480L818 426L828 426L830 480L834 600L840 640L844 660L848 685L850 680L855 710L858 780L862 950L863 1050L865 1300L866 1496`;
const fx = (f: number) => 1277.3 + (Math.log10(f / 20) / 3) * 681.5;
const freqs: [number, string][] = [
  [20, "20"], [30, "30"], [40, "40"], [60, "60"], [80, "80"], [100, "100"], [200, "200"], [300, "300"], [400, "400"], [600, "600"], [800, "800"],
  [1000, "1K"], [2000, "2K"], [3000, "3K"], [4000, "4K"], [6000, "6K"], [8000, "8K"], [10000, "10K"], [20000, "20K"],
];
const grid = [1, 10, 100, 1000].flatMap((k) => [2, 3, 4, 5, 6, 7, 8, 9, 10].map((m) => k * m * 10)).filter((f) => f > 20 && f < 20000);

function SpanGraph() {
  return (
    <Svg width={718} height={386} viewBox="1266 826 718 386">
      <defs>
        <radialGradient id="gb" cx="0.35" cy="0.4" r="0.75"><stop offset="0" stopColor="#292b2d" /><stop offset="1" stopColor="#151617" /></radialGradient>
        <linearGradient id="gf" gradientUnits="userSpaceOnUse" x1="0" y1="420" x2="0" y2="1496"><stop offset="0" stopColor="#6d9628" /><stop offset="1" stopColor="#486418" /></linearGradient>
      </defs>
      <rect x={1276} y={830} width={685} height={361} rx={3} fill="url(#gb)" stroke="#777" strokeWidth={1} />
      {grid.map((f) => <rect key={f} x={fx(f)} y={833} width={1} height={356} fill="#3c3e40" />)}
      {Array.from({ length: 9 }, (_, i) => <rect key={i} x={1277} y={867.6 + i * 35.6} width={682} height={1.2} fill="#404244" />)}
      <g transform="translate(1250 690) scale(0.58038 0.33333)">
        <path d={dspan + "Z"} fill="url(#gf)" opacity={0.93} />
        <path d={dspan} fill="none" stroke="#8fc820" strokeWidth={1.2} style={{ vectorEffect: "non-scaling-stroke" }} />
      </g>
      {grid.filter((f) => f > 200 && f < 2500).map((f) => <rect key={f} x={fx(f)} y={1000} width={1} height={188} fill="#9ab050" opacity={0.18} />)}
      {grid.concat(20000, 20).map((f) => <rect key={f} x={fx(f)} y={1192} width={1.2} height={5} fill="#1c1c1c" />)}
      <g fontFamily={NARROW} fill="#cecece" fontSize={12.5}>
        {freqs.map(([f, t]) => <text key={f} x={fx(f) - t.length * 2.4} y={1208.5} textLength={t.length * 4.8} lengthAdjust="spacingAndGlyphs">{t}</text>)}
        {Array.from({ length: 11 }, (_, i) => (
          <g key={i}>
            <rect x={1962} y={832 + i * 35.6} width={6} height={1.4} fill="#1c1c1c" />
            {i < 10 && <rect x={1962} y={849.8 + i * 35.6} width={3.5} height={1.2} fill="#1c1c1c" />}
            <text x={1972} y={837 + i * 35.6} textLength={13} lengthAdjust="spacingAndGlyphs">{-18 - i * 6}</text>
          </g>
        ))}
      </g>
    </Svg>
  );
}

function OutMeter() {
  return (
    <Svg width={84} height={480} viewBox="2019 825 84 480">
      <defs>
        <linearGradient id="om" x1="0" y1="0" x2="0" y2="1">
          <stop offset="0" stopColor="#f0861a" /><stop offset="0.07" stopColor="#fbaa22" /><stop offset="0.17" stopColor="#f3c824" /><stop offset="0.26" stopColor="#dcd61e" />
          <stop offset="0.34" stopColor="#9cc816" /><stop offset="0.5" stopColor="#48bb12" /><stop offset="0.62" stopColor="#1ab30e" /><stop offset="1" stopColor="#0ba808" />
        </linearGradient>
      </defs>
      <rect x={2049} y={831} width={48} height={460} fill="#1c1210" />
      <rect x={2051} y={833} width={44} height={69} fill="#331a18" />
      <rect x={2051} y={902} width={44} height={387} fill="url(#om)" />
      {Array.from({ length: 111 }, (_, i) => <rect key={i} x={2050} y={833 + i * 4.13} width={46} height={1.3} fill="#000" opacity={0.36} />)}
      <rect x={2072.5} y={832} width={1.5} height={458} fill="#101010" opacity={0.8} />
      <rect x={2051} y={880} width={44} height={3.5} fill="#f4f4f4" />
      <g fontFamily={NARROW} fill="#cecece" fontSize={12.5}>
        {Array.from({ length: 12 }, (_, i) => {
          const t = String(6 - i * 6);
          const w = t.length * 4.4;
          return (
            <g key={i}>
              <rect x={2041} y={834 + i * 41.3} width={6} height={1.4} fill="#1c1c1c" />
              {i < 11 && <rect x={2043} y={854.6 + i * 41.3} width={3.5} height={1.2} fill="#1c1c1c" />}
              <text x={2037 - w} y={839 + i * 41.3} textLength={w} lengthAdjust="spacingAndGlyphs">{t}</text>
            </g>
          );
        })}
        <text x={2060} y={1302} textLength={4.5} lengthAdjust="spacingAndGlyphs">C</text>
        <text x={2082} y={1302} textLength={4.5} lengthAdjust="spacingAndGlyphs">D</text>
      </g>
    </Svg>
  );
}

const L = (p: FitProps) => <Fit f={NARROW} s={15.5} c="#dadada" {...p} />;
const K = (p: FitProps) => <Fit f={NARROW} s={16} c="#111" {...p} />;

const StatCol = styled.div<{ $w: number }>`
  display: flex;
  flex: none;
  flex-direction: column;
  align-items: center;
  width: ${(p) => p.$w}px;
  gap: 0;
  & > span { height: 16px; line-height: 16px; }
  & > span + span { height: 14px; line-height: 12px; }
`;

const Molecule = ({ s }: { s: number }) => (
  <Svg width={s} height={s * 0.62} viewBox="0 0 36 22">
    <path d="M1 9L6 5L12 6L16 9V14L10 17L5 13Z" fill="#9ea0c0" /><path d="M17 6L24 2L33 4L35 12L31 18L24 19L17 14Z" fill="#b8badb" />
    <rect x={3} y={11} width={9} height={6} fill="#fff" stroke="#8488c8" /><rect x={23} y={1} width={9} height={6} fill="#fff" stroke="#8488c8" /><rect x={19} y={15} width={9} height={6} fill="#fff" stroke="#8488c8" />
  </Svg>
);

function Span() {
  return (
    <SpanWindow>
      <SpanTitle>
        <Molecule s={24} /><Gap $w={4} /><Fit w={44} s={18} c="#111" f={SEGOE}>SPAN</Fit><Grow /><WinGlyph c="#000" /><Gap $w={7} />
      </SpanTitle>
      <PresetBar>
        <Fit w={50} s={13.5} c="#111">Presets:</Fit><Gap $w={9} />
        <ComboBox><Fit w={45} s={13.5} c="#111">Default</Fit><SmallBtn $w={19}><Svg width={11} height={8} viewBox="0 0 11 8"><path d="M1 1L5.5 7L10 1" fill="none" stroke="#555" strokeWidth={1.6} /></Svg></SmallBtn></ComboBox>
        <Gap $w={4} />
        <SmallBtn $w={23}><Svg width={14} height={11} viewBox="0 0 14 11"><path d="M1 10V1H5L6 3H11V5M1 10L4 5H13L10 10Z" fill="none" stroke="#66645a" strokeWidth={1.2} /></Svg></SmallBtn><Gap $w={5} />
        <SmallBtn $w={23}><Svg width={12} height={12} viewBox="0 0 12 12"><path d="M0 0H10L12 2V12H0Z" fill="#66645a" /><rect x={3} y={0} width={6} height={4} fill="#eee" /><rect x={2.5} y={7} width={7} height={5} fill="#eee" /></Svg></SmallBtn>
      </PresetBar>
      <SpanTools>
        <SBtn $w={21}><K w={6} b={700}>?</K></SBtn><Gap $w={3} />
        <SBtn $w={53} $j="l"><K w={43}>Presets</K></SBtn><SBtn $w={18} $j="r"><Tri d="d" w={7} h={7} /></SBtn><Gap $w={4} />
        <SBtn $w={21}><Svg width={14} height={14} viewBox="0 0 14 14"><path d="M3.500 3Q0 7 4 11Q9 14 12 9Q13 6 11 3M9 1.500H13.500M10.500 1V6" fill="none" stroke="#222" strokeWidth={1.8} /></Svg></SBtn><Gap $w={3} />
        <SBtn $w={21} $bg="#555"><Svg width={14} height={14} viewBox="0 0 14 14"><path d="M11 3Q14 7 10 11Q5 14 2 9Q0 5 4 2" fill="none" stroke="#444" strokeWidth={1.8} /></Svg></SBtn><Gap $w={2} />
        <SBtn $w={18} $j="l" $bg="linear-gradient(#fff19a,#f5d95c)"><K w={7} s={17} b={700}>A</K></SBtn><SBtn $w={18} $j="r"><K w={7} s={17} b={700}>B</K></SBtn><Gap $w={3} />
        <SBtn $w={35}><K w={8} s={17} b={700}>A</K><Gap $w={2} /><Tri d="r" w={6} h={6} /><Gap $w={2} /><K w={7} s={17} b={700}>B</K></SBtn><Gap $w={3} />
        <SBtn $w={55} $j="l"><K w={45}>Routing</K></SBtn><SBtn $w={19} $j="r"><Tri d="d" w={7} h={7} /></SBtn><Gap $w={3} />
        <SBtn $w={49} $j="l"><K w={5} b={700}>1</K></SBtn><SBtn $w={32} $j="m"><K w={24} s={17} b={700}>SOLO</K></SBtn><SBtn $w={55} $j="r"><K w={44}>Copy to</K></SBtn><Gap $w={8} />
        <SBtn $w={122}><K w={111} b={700} s={17}>HIDE METERS AND STATS</K></SBtn>
        <Gap $w={66} />
        <Svg width={22} height={21} viewBox="0 0 22 21"><rect width={22} height={21} rx={3} fill="#cf2228" /><path d="M4 1Q5 9 10 12M18 1Q14 8 9 17" fill="none" stroke="#fff" strokeWidth={2.2} /><circle cx={8} cy={18} r={2.6} fill="#fff" /><path d="M17 8V18" stroke="#fff" strokeWidth={1.6} /></Svg>
        <Gap $w={6} /><Fit w={44} s={17} f={ARIAL} c="#111">SPAN</Fit><Grow />
        <SBtn $w={71}><K w={46}>Settings</K><Gap $w={5} /><Tri d="d" w={7} h={6} /></SBtn><Gap $w={5} />
      </SpanTools>
      <SpanBody>
        <Col $g={3}>
          <SpecPanel>
            <Row $h={29}>
              <Tab $w={77} $h={22}><L w={63} f={ARIAL} s={15}>Spectrum</L></Tab><Gap $w={8} />
              <SBtn $w={35}><K w={23} s={17} b={700}>HOLD</K></SBtn><Gap $w={5} />
              <SBtn $w={29}><Svg width={21} height={12}><rect width={21} height={12} rx={2} fill="#78c408" stroke="#3f7804" /></Svg></SBtn><Gap $w={8} />
              <L w={59} f={ARIAL}>Underlay</L><Gap $w={5} />
              <SBtn $w={64}><K w={12} b={700}>---</K></SBtn><Grow />
              <L w={37} f={ARIAL}>Mode</L><Gap $w={5} />
              <SBtn $w={50}><K w={38} s={17} b={700}>DEFAULT</K></SBtn><Gap $w={4} />
              <SBtn $w={32}><K w={21}>Edit</K></SBtn><Gap $w={4} />
            </Row>
            <Row $h={386}>
              <SpanGraph />
              <VScroll>
                <Gap $h={2} /><SquareBtn><Tri d="u" w={11} h={11} c="#1a1a1a" /></SquareBtn><Thumb $w={16} $h={10} /><VTrack /><Thumb $w={16} $h={10} /><SquareBtn><Tri d="d" w={11} h={11} c="#1a1a1a" /></SquareBtn>
              </VScroll>
            </Row>
            <Row $h={24} $pl={4}>
              <SquareBtn><Tri d="l" w={9} h={12} c="#1a1a1a" /></SquareBtn><Thumb $w={10} $h={17} /><HTrack /><Thumb $w={10} $h={17} /><SquareBtn><Tri d="r" w={9} h={12} c="#1a1a1a" /></SquareBtn>
              <Gap $w={3} /><SquareBtn><Svg width={12} height={14} viewBox="0 0 12 14"><polygon points="6,0 12,7 6,14 0,7" fill="#1a1a1a" /></Svg></SquareBtn><Gap $w={4} />
            </Row>
          </SpecPanel>
          <Row>
            <StatPanel $w={549}>
              <Row $h={30}>
                <Tab $w={71} $h={23}><L w={57} f={ARIAL} s={15}>Statistics</L></Tab><Gap $w={6} />
                <L w={31} f={ARIAL}>RMS</L><Gap $w={12} /><L w={19} b={700} c="#f0f0f0">-8.0</L><Gap $w={11} /><L w={19} b={700} c="#f0f0f0">-8.0</L><Grow />
                <SBtn $w={43}><K w={32}>Reset</K></SBtn><Gap $w={9} /><L w={56} f={ARIAL}>Metering</L><Gap $w={6} /><SBtn $w={46}><K w={23} s={17} b={700}>DBFS</K></SBtn><Gap $w={4} />
              </Row>
              <Row $pl={33}>
                <StatCol $w={112}><L w={111} f={ARIAL}>Max Crest Factor</L><L w={48} b={700} c="#f0f0f0">12.7   12.7</L></StatCol><Gap $w={97} />
                <StatCol $w={63}><L w={62} f={ARIAL}>Clippings</L><L w={35} b={700} c="#f0f0f0">0        0</L></StatCol><Gap $w={128} />
                <StatCol $w={47}><L w={33} f={ARIAL}>Peak</L><L w={45} b={700} c="#f0f0f0">0.0   0.0</L></StatCol>
              </Row>
            </StatPanel>
            <Gap $w={3} />
            <StatPanel $w={198}>
              <Row $h={30}>
                <Tab $w={126} $h={22}><L w={111} f={ARIAL} s={15}>Correlation Meter</L></Tab><Gap $w={9} /><L w={15} b={700}>R/L</L><Gap $w={16} /><L w={15} b={700} c="#f0f0f0">0.0</L>
              </Row>
              <Row $pl={6}>
                <Svg width={186} height={36} viewBox="1823 1271 186 36">
                  <defs><linearGradient id="cm"><stop offset="0" stopColor="#c8c024" /><stop offset="0.5" stopColor="#76c81c" /><stop offset="1" stopColor="#1fbc14" /></linearGradient></defs>
                  <rect x={1831} y={1271} width={170} height={14} fill="#2c1e18" stroke="#222" />
                  <rect x={1915} y={1272} width={85} height={12} fill="url(#cm)" />
                  {Array.from({ length: 40 }, (_, i) => <rect key={i} x={1833 + i * 4.2} y={1271} width={1.2} height={14} fill="#000" opacity={0.4} />)}
                  <g fontFamily={NARROW} fontSize={12} fill="#cecece">
                    {["-1.00", "-0.50", "0.00", "0.50", "1.00"].map((t, i) => (
                      <text key={t} x={1824 + i * 41 + (i > 1 ? 1 : 0)} y={1299} textLength={t.length > 4 ? 19 : 16} lengthAdjust="spacingAndGlyphs">{t}</text>
                    ))}
                  </g>
                </Svg>
              </Row>
            </StatPanel>
          </Row>
        </Col>
        <OutPanel><Tab $w={38} $h={22}><L w={24} f={ARIAL} s={15}>Out</L></Tab><Gap $h={7} /><OutMeter /></OutPanel>
      </SpanBody>
    </SpanWindow>
  );
}

/* ---------- taskbar ---------- */

const Bar = styled.footer`
  position: absolute;
  left: 0;
  top: 1380px;
  width: 2160px;
  height: 60px;
  display: flex;
  background:
    repeating-linear-gradient(172deg, rgba(255, 240, 220, 0.015) 0 2px, rgba(0, 0, 0, 0.05) 2px 5px),
    linear-gradient(90deg, #1b1715, #17130f 200px, #0c0909 230px, #0c0909 600px, #1a1613 640px, #191512 1500px, #0d0b0b 1560px, #0f0c0a 1850px, #15110f 2160px);
`;
const Cell = styled.div<{ $w: number; $active?: boolean; $run?: boolean }>`
  display: flex;
  flex: none;
  align-items: center;
  justify-content: center;
  width: ${(p) => p.$w}px;
  height: 60px;
  padding-top: 1px;
  ${(p) => p.$run && "background: linear-gradient(#ffc9b0, #ffc9b0) 50% 100% / 53px 3px no-repeat;"}
  ${(p) => p.$active && "background: linear-gradient(#ffc9b0, #ffc9b0) 0 100% / 100% 3px no-repeat, linear-gradient(90deg, #585453 0 57px, #393534 57px 60px, #45413f 60px);"}
`;
const Clock = styled.div`
  display: flex;
  flex: none;
  flex-direction: column;
  align-items: center;
  width: 106px;
  padding-top: 6px;
  gap: 4px;
  border-right: 1px solid #5a5652;
`;

const Ico = ({ children, s = 36 }: { children: React.ReactNode; s?: number }) => <Svg width={s} height={s} viewBox="0 0 36 36">{children}</Svg>;
const Swirl = ({ s = 36 }: { s?: number }) => (
  <Ico s={s}><circle cx={18} cy={18} r={17.5} fill="#84909a" /><path d="M1 18Q3 20 8 20Q17 19 20 13L16 9H31V24L27 20Q22 29 13 29Q3 28 1 18Z" fill="#fff" /></Ico>
);
const Fox = () => (
  <Ico>
    <circle cx={19} cy={18} r={15} fill="#1c69a8" /><path d="M14 4Q22 1 28 7L26 14L16 14Z" fill="#3aa4dc" />
    <path d="M26 4Q36 12 33 23Q29 35 17 34Q4 32 2 20Q1 12 4 6L7 11L12 8Q13 13 18 14L20 17L14 19Q13 23 18 24Q27 25 29 17Q30 10 26 4Z" fill="#e8661c" />
    <path d="M27 5Q36 13 32 24Q29 29 24 31Q31 23 30 15Z" fill="#fcd53a" /><path d="M4 18Q6 30 18 32Q10 33 4 26Z" fill="#c23a12" />
  </Ico>
);
const Plug = ({ s = 34 }: { s?: number }) => (
  <Ico s={s}><rect x={1} y={0} width={34} height={36} rx={7} fill="#55585c" stroke="#888" strokeWidth={2} /><circle cx={18} cy={18} r={12} fill="#3a3c3f" stroke="#ccc" strokeWidth={2} /><g fill="#ddd"><circle cx={11} cy={18} r={1.8} /><circle cx={25} cy={18} r={1.8} /><circle cx={13} cy={24} r={1.8} /><circle cx={23} cy={24} r={1.8} /><circle cx={18} cy={26} r={1.8} /></g></Ico>
);

function Taskbar() {
  return (
    <Bar>
      <Cell $w={72}><Svg width={24} height={24} viewBox="0 0 24 24"><path d="M0 3.5L10.5 2V11.5H0ZM11.5 1.8L24 0V11.5H11.5ZM0 12.5H10.5V22L0 20.5ZM11.5 12.5H24V24L11.5 22.2Z" fill="#fff" /></Svg></Cell>
      <Cell $w={72}><Svg width={26} height={26} viewBox="0 0 26 26"><g fill="none" stroke="#fff" strokeWidth={1.7}><circle cx={16.5} cy={9} r={8} /><path d="M11 15L1 25" /></g></Svg></Cell>
      <Cell $w={74}><Svg width={30} height={22} viewBox="0 0 30 22"><g fill="none" stroke="#fff" strokeWidth={1.6}><rect x={6} y={1} width={18} height={20} /><path d="M3 4H1V18H3M27 4H29V18H27" /></g></Svg></Cell>
      <Cell $w={67}><Ico><ellipse cx={13} cy={17} rx={12} ry={8} fill="#77777a" transform="rotate(-15 13 17)" stroke="#b33" /><ellipse cx={15} cy={9} rx={12} ry={8} fill="#eef0f8" stroke="#c22" strokeWidth={1.8} transform="rotate(-15 15 9)" /><path d="M9 3L26 25M17 2L20 24" stroke="#9aa" strokeWidth={2} /><ellipse cx={20} cy={29} rx={3} ry={5} fill="none" stroke="#3a9bd8" strokeWidth={2} /><ellipse cx={30} cy={26} rx={5} ry={3} fill="none" stroke="#3a9bd8" strokeWidth={2} transform="rotate(35 30 26)" /></Ico></Cell>
      <Cell $w={67}><Swirl /></Cell>
      <Cell $w={67}><Fox /></Cell>
      <Cell $w={67}><Ico><path d="M2 6H14L16 8H34V31H2Z" fill="#fbdc7a" /><path d="M2 6H14L15 9H2Z" fill="#f0c040" /><rect x={3} y={7} width={7} height={2} fill="#fff" /><path d="M8 19H28V32H23V25H13V32H8Z" fill="#1cb0ec" /></Ico></Cell>
      <Cell $w={67}><Ico><circle cx={18} cy={18} r={17} fill="#0f9d58" /><path d="M3 10A17 17 0 0 1 33.5 10.5L18 10.5L11 22Z" fill="#db4437" /><path d="M33.5 10.5A17 17 0 0 1 17 35L25 21L25 10.5Z" fill="#ffcd40" /><circle cx={18} cy={18} r={8} fill="#fff" /><circle cx={18} cy={18} r={6.2} fill="#4a86f0" /></Ico></Cell>
      <Cell $w={67}><Ico><circle cx={18} cy={18} r={17.5} fill="#8a68a0" /><path d="M4 8Q9 10 14 8L16 13L9 18L11 22L5 22L2 14ZM19 4L28 6L33 14L30 20L26 14L22 17L18 11ZM5 25L12 24L14 31L10 32ZM20 23L31 22L27 31L20 34Z" fill="#52e852" /><path d="M10 4Q18 1 26 4M6 21H30M8 26H28M12 14H24" stroke="#6a4a80" strokeWidth={1.2} fill="none" /></Ico></Cell>
      <Cell $w={67}><Ico><path d="M35 8A16.5 16.5 0 1 0 35 28L27 22A7 7 0 1 1 27 14Z" fill="#c8392b" /><path d="M22 3L17 20" stroke="#2f8fd0" strokeWidth={3.5} /><path d="M13 18L22 22Q18 31 10 34Q5 33 1 29Q9 26 13 18Z" fill="#f0d0a0" /><path d="M13 17L22 21" stroke="#2f8fd0" strokeWidth={4} /></Ico></Cell>
      <Cell $w={67}><Ico><path d="M14 2Q26 1 27 11Q27 17 22 18Q26 22 20 26Q11 28 6 22Q0 15 3 8Q7 2 14 2Z" fill="#e6b98c" /><g><circle cx={8} cy={9} r={2.6} fill="#48c" /><circle cx={15} cy={5.5} r={2.4} fill="#38a" /><circle cx={22} cy={8} r={2.4} fill="#d33" /><circle cx={22} cy={15} r={2.4} fill="#3a4" /></g><circle cx={14} cy={17} r={3} fill="#17130f" /><path d="M35 1L24 25" stroke="#2c6ad0" strokeWidth={3.5} /><path d="M25 24L19 34L23 33L27 26Z" fill="#c98530" /></Ico></Cell>
      <Cell $w={67}><Ico><path d="M4 24Q1 6 18 6Q35 6 32 24" fill="none" stroke="#1a1ab8" strokeWidth={3} /><path d="M9 18L13 14L18 15L23 14L27 18V28L24 33H12L9 28Z" fill="#f8c21c" /><path d="M8 23H28" stroke="#e02" strokeWidth={2.6} strokeDasharray="2 1" /><path d="M4 20Q1 26 6 33L9 31V20ZM32 20Q35 26 30 33L27 31V20Z" fill="#1717a0" /></Ico></Cell>
      <Cell $w={67} $run><Tower size={36} /></Cell>
      <Cell $w={67}><Svg width={35} height={36} viewBox="0 0 35 36"><rect width={35} height={36} fill="#1818d0" /><rect x={1} y={2} width={24} height={17} fill="#18e0e0" /><circle cx={7} cy={6} r={3.5} fill="#e11" /><path d="M2 19L9 10L14 14L20 7L25 12V19Z" fill="#847a28" /><path d="M30 2V20" stroke="#fff" strokeWidth={8} strokeDasharray="2 2" /><rect x={1} y={21} width={33} height={13} fill="#fff" /><text x={3} y={33} fontFamily={ARIAL} fontSize={12} fill="#1818d0" textLength={29} lengthAdjust="spacingAndGlyphs">SSTV</text></Svg></Cell>
      <Cell $w={67} $run><Ico><path d="M7 7Q20 3 33 7V29Q20 27 5 31Q2 18 7 7Z" fill="#f4dc10" stroke="#a89400" /><path d="M8 7Q2 16 4 30" stroke="#fff6a0" strokeWidth={2} fill="none" /><text x={7} y={24} fontFamily={ARIAL} fontWeight={700} fontStyle="italic" fontSize={14} fill="#111" textLength={24} lengthAdjust="spacingAndGlyphs">PDF</text></Ico></Cell>
      <Cell $w={67} $run><Plug /></Cell>
      <Cell $w={67} $run><Ico><path d="M9 27L21 9" stroke="#f0e020" strokeWidth={6} /><path d="M10 29Q20 28 25 12" stroke="#c9a000" strokeWidth={3} fill="none" /><path d="M2 34L33 3" stroke="#e8e8e8" strokeWidth={4} /><path d="M2 34L33 3" stroke="#333" strokeWidth={1} /></Ico></Cell>
      <Gap $w={2} />
      <Cell $w={64} $active><Molecule s={36} /></Cell>
      <Cell $w={65} $run><Svg width={34} height={28} viewBox="0 0 34 28"><rect x={0.5} y={0.5} width={33} height={27} fill="#000" stroke="#aaa" /><rect x={1} y={1} width={32} height={3} fill="#dfe6f0" /><path d="M1 17Q16 12 33 13V5H1Z" fill="#2c2c2c" /><text x={4} y={15} fontFamily={'"Liberation Mono", monospace'} fontSize={10} fill="#fff" fontWeight={700}>C:\_</text></Svg></Cell>
      <Cell $w={67} $run><Svg width={32} height={33} viewBox="0 0 32 33"><rect x={1} y={1} width={30} height={31} rx={3} fill="#b01414" stroke="#c08828" strokeWidth={1.6} /><rect x={4} y={5} width={7} height={14} fill="#222" /><rect x={20} y={14} width={7} height={14} fill="#222" /><path d="M10 9L22 18M9 16L22 25" stroke="#8899bb" strokeWidth={1.4} /></Svg></Cell>
      <Cell $w={66} $run><Swirl /></Cell>
      <Cell $w={66} $run><Svg width={36} height={36} viewBox="0 0 36 36"><defs><linearGradient id="tb" x1="0" y1="0" x2="0" y2="1"><stop offset="0" stopColor="#0a84d8" /><stop offset="1" stopColor="#06186c" /></linearGradient></defs><rect width={36} height={36} fill="url(#tb)" /><path d="M0 28C0 19 3 15 7 17S14 24 20 21S26 6 31 7L36 10M2 29C10 33 14 27 15 20S19 14 22 19S30 20 31 15S33 9 36 10" fill="none" stroke="#0a1430" strokeWidth={2} /></Svg></Cell>
      <Cell $w={66} $run><Fox /></Cell>
      <Gap $w={5} />
      <Cell $w={47}><Swirl s={23} /></Cell>
      <Cell $w={48}><Plug s={23} /></Cell>
      <Cell $w={48}><Svg width={23} height={23}><rect width={23} height={23} fill="#0fa14a" /><path d="M6 3L18 12L6 20Z" fill="#d8e8f0" /><path d="M6 13L18 12L6 20Z" fill="#5ab4e0" /></Svg></Cell>
      <Cell $w={48}><Svg width={23} height={23}><rect width={23} height={23} rx={4} fill="#a4a4a4" /><rect x={6} y={10} width={11} height={8} fill="#3a3a3a" /><path d="M8 10V7Q11.5 2 15 7V10" stroke="#3a3a3a" strokeWidth={2} fill="none" /></Svg></Cell>
      <Cell $w={48}><Svg width={19} height={19}><circle cx={9.5} cy={9.5} r={9.3} fill="#0fa8f0" /><path d="M6 5.5H13M6 9.5H12L8 14" stroke="#fff" strokeWidth={2.2} fill="none" /></Svg></Cell>
      <Cell $w={48}><Svg width={24} height={17} viewBox="0 0 24 17"><rect x={4} y={4} width={17} height={11} fill="#fff" /><rect x={21.5} y={7} width={2} height={5} fill="#fff" /><path d="M1 1V5M5 1V5M0 5H6V8H0ZM3 8V14H5" stroke="#fff" strokeWidth={1.4} fill="#17130f" /></Svg></Cell>
      <Cell $w={49}><Svg width={20} height={20} viewBox="0 0 20 20"><g fill="none" stroke="#fff" strokeWidth={1.4}><path d="M1 18Q2 2 18 1" opacity={0.55} /><path d="M6 18Q7 7 18 6M11 18Q12 12 18 11" /></g><circle cx={17} cy={17} r={2} fill="#fff" /></Svg></Cell>
      <Cell $w={47}><Svg width={23} height={20} viewBox="0 0 23 20"><g fill="none" stroke="#fff" strokeWidth={1.4}><path d="M1 7H4L9 2V18L4 13H1ZM12 7Q14 10 12 13M15 4.5Q19 10 15 15.5M18.5 2Q24 10 18.5 18" /></g></Svg></Cell>
      <Cell $w={49}><Svg width={25} height={24} viewBox="0 0 25 24"><g fill="none" stroke="#fff" strokeWidth={1.5}><path d="M14 18H1V1H22V12M5 5H18M5 9H18M5 13H12" /><circle cx={18.5} cy={17.5} r={5} /><path d="M16 17.5H21" /></g></Svg></Cell>
      <Cell $w={56}><Svg width={34} height={20} viewBox="0 0 34 20"><rect x={1} y={1} width={32} height={18} fill="none" stroke="#fff" strokeWidth={1.6} /><path d="M5 6H29M5 10H29" stroke="#fff" strokeWidth={1.5} strokeDasharray="2 2" /><path d="M8 14H26" stroke="#fff" strokeWidth={1.5} /></Svg></Cell>
      <Gap $w={2} />
      <Clock>
        <Fit w={42} s={17.5} c="#fff" f={SEGOE}>15:17</Fit>
        <Fit w={84} s={17.5} c="#fff" f={SEGOE}>23-7-2016</Fit>
      </Clock>
    </Bar>
  );
}

export default function App() {
  return (
    <>
      <Global />
      <Desktop>
        <Fldigi />
        <Sdr />
        <Span />
        <Taskbar />
      </Desktop>
    </>
  );
}
